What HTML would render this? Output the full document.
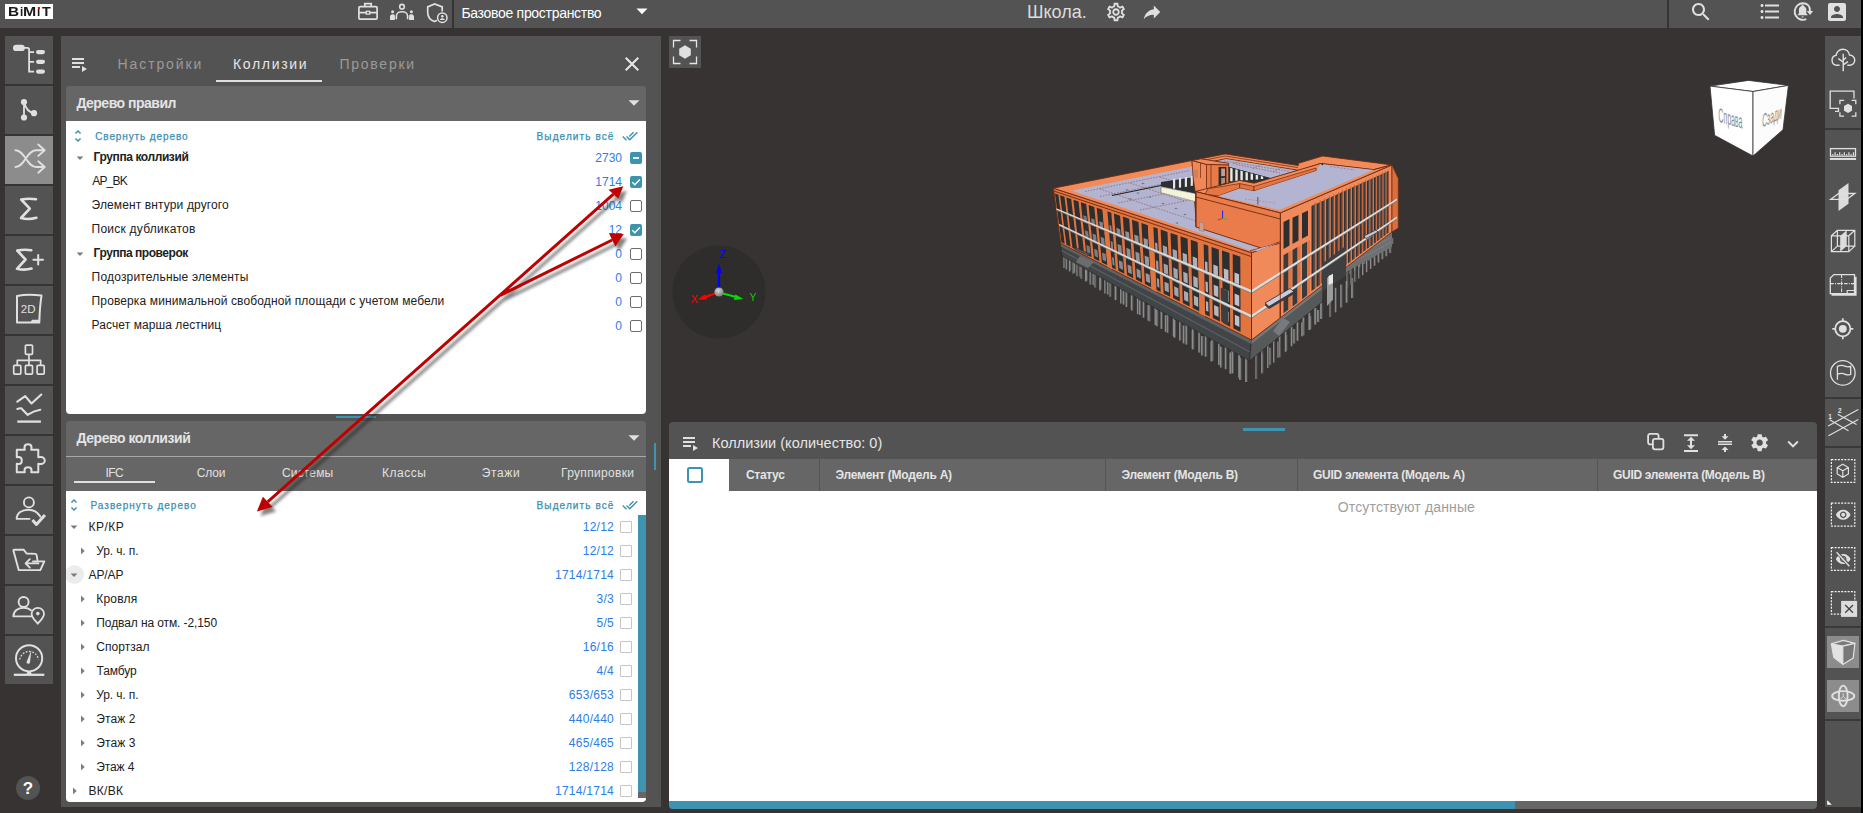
<!DOCTYPE html>
<html lang="ru">
<head>
<meta charset="utf-8">
<title>BIMIT — Коллизии</title>
<style>
*{box-sizing:border-box;margin:0;padding:0}
html,body{width:1863px;height:813px;overflow:hidden;background:#363332;font-family:"Liberation Sans",sans-serif;font-size:12px;color:#212121}
.abs,.abs-c>*{position:absolute}
#app{position:relative;width:1863px;height:813px;overflow:hidden;background:#363332}
#app div,#app span,#app svg{position:absolute}
.t{white-space:nowrap;line-height:1}
#topbar{left:0;top:0;width:1863px;height:28px;background:#535353}
.lb{left:5px;width:48px;height:48px;background:#535353}
.lb.act{background:#8c8c8c}
#lpanel{left:61px;top:36px;width:600px;height:771px;background:#535353}
.sech{background:#666;border-radius:4px 4px 0 0}
.white{background:#fff}
.row{left:0;width:580px;height:24px}
.num{color:#2b7de9;text-align:right;width:80px}
.cb{width:12px;height:12px;border:1.5px solid #6e6e6e;border-radius:2px;background:#fff}
.cb.on{border:none;background:#3d93b0}
.cb2{width:12px;height:12px;border:1.5px solid #c6c6c6;border-radius:1px;background:#fff}
.teal{color:#3a8fb0;-webkit-text-stroke:0.250px #3a8fb0}
#rtool{left:1825px;top:36px;width:36px;height:771px;background:#535353}
.sep{left:0;width:36px;height:2px;background:#363332}
</style>
</head>
<body>
<div id="app">

<!-- TOP BAR -->
<div id="topbar">
  <!-- logo -->
  <div style="left:5px;top:4px;width:48px;height:15px;background:#fff"></div>
  <span class="t" id="lg0" style="left:8.2px;top:5px;font-size:13px;font-weight:bold;color:#1a1a1a;transform-origin:0 0;transform:scaleX(1.18)">B</span><span class="t" id="lg1" style="left:19.6px;top:5px;font-size:13px;font-weight:bold;color:#1a1a1a;transform-origin:0 0;transform:scaleX(0.90)">i</span><span class="t" id="lg2" style="left:23.2px;top:5px;font-size:13px;font-weight:bold;color:#1a1a1a;transform-origin:0 0;transform:scaleX(1.22)">M</span><span class="t" id="lg3" style="left:37.3px;top:5px;font-size:13px;font-weight:bold;color:#1a1a1a;transform-origin:0 0;transform:scaleX(0.90)">i</span><span class="t" id="lg4" style="left:41.8px;top:5px;font-size:13px;font-weight:bold;color:#1a1a1a;transform-origin:0 0;transform:scaleX(1.10)">T</span><div style="left:38px;top:7px;width:2px;height:1.900px;background:#f00"></div>
  <!-- briefcase -->
  <svg style="left:357px;top:1px" width="22" height="20" viewBox="0 0 22 20" fill="none" stroke="#e0e0e0" stroke-width="1.7">
    <rect x="1.9" y="5.6" width="18.2" height="12.6" rx="1.2"/>
    <path d="M7.8 5.4V2.6h6.400V5.400"/>
    <path d="M1.900 11.700h7.300M12.800 11.700h7.300"/>
    <rect x="9.300" y="10.300" width="3.400" height="2.800" stroke-width="1.300"/>
  </svg>
  <!-- groups -->
  <svg style="left:388px;top:2px" width="28" height="20" viewBox="0 0 28 20" fill="none" stroke="#e0e0e0" stroke-width="1.600">
    <circle cx="14" cy="4.700" r="2.300"/>
    <path d="M8.400 17.200v-3.300c0-2.500 2.500-4.200 5.600-4.200s5.600 1.700 5.600 4.200v3.300" />
    <circle cx="4.600" cy="9.700" r="1.500" fill="#e0e0e0" stroke="none"/>
    <circle cx="23.400" cy="9.700" r="1.500" fill="#e0e0e0" stroke="none"/>
    <path d="M2 18v-3.200c0-1.500 1.100-2.600 2.600-2.600s2.300.7 2.300 1.500V18zM26 18v-3.200c0-1.500-1.100-2.600-2.600-2.600s-2.300.7-2.300 1.500V18z" fill="#e0e0e0" stroke="none"/>
  </svg>
  <!-- shield user -->
  <svg style="left:425px;top:1px" width="24" height="24" viewBox="0 0 24 24" fill="none" stroke="#e0e0e0" stroke-width="1.700">
    <path d="M17.200 10.500V5.900L9.600 2.900 2.700 5.900v5.300c0 4.300 2.800 7.900 6.900 9.300 .9-.3 1.600-.7 2.300-1.200"/>
    <circle cx="17.300" cy="16.700" r="4.700" stroke-width="1.500"/>
    <circle cx="17.300" cy="15.300" r="1.300" fill="#e0e0e0" stroke="none"/>
    <path d="M14.700 19c.5-1.200 1.500-1.700 2.600-1.700s2.100.5 2.600 1.700z" fill="#e0e0e0" stroke="none"/>
  </svg>
  <div style="left:452px;top:0;width:2px;height:28px;background:#363332"></div>
  <span class="t" id="tx-base" style="left:461.4px;top:6px;font-size:14px;color:#fff;letter-spacing:-0.30px">Базовое пространство</span>
  <svg style="left:636px;top:8px" width="12" height="7" viewBox="0 0 12 7"><path d="M0.500 0.500h11L6 6.200z" fill="#fff"/></svg>
  <!-- project name -->
  <span class="t" id="tx-school" style="left:1027px;top:3px;font-size:18px;color:#dcdcdc">Школа.</span>
  <svg style="left:1105px;top:1px" width="22" height="22" viewBox="0 0 24 24"><path fill="#e0e0e0" d="M19.430 12.980c.040-.320.070-.640.070-.980 0-.340-.030-.660-.070-.980l2.110-1.650c.190-.150.240-.420.120-.640l-2-3.460c-.090-.160-.260-.250-.440-.250-.060 0-.120.010-.170.030l-2.490 1c-.520-.400-1.080-.730-1.690-.980l-.380-2.650C14.460 2.180 14.250 2 14 2h-4c-.250 0-.460.180-.490.420l-.380 2.650c-.610.250-1.170.590-1.690.980l-2.490-1c-.060-.020-.120-.030-.180-.030-.170 0-.340.090-.430.250l-2 3.460c-.130.220-.070.490.120.640l2.110 1.650c-.040.320-.070.650-.070.980 0 .330.030.660.070.980l-2.110 1.650c-.190.150-.240.420-.120.640l2 3.460c.090.160.260.250.440.250.060 0 .120-.010.170-.030l2.490-1c.520.400 1.080.730 1.690.980l.380 2.650c.030.240.240.420.490.420h4c.250 0 .460-.180.490-.420l.380-2.650c.610-.250 1.170-.590 1.690-.980l2.490 1c.060.020.120.030.180.030.170 0 .340-.090.430-.250l2-3.460c.120-.220.070-.490-.120-.640l-2.110-1.650zm-1.980-1.710c.040.310.050.520.050.730 0 .210-.020.430-.050.730l-.140 1.130.890.700 1.080.840-.700 1.210-1.270-.510-1.040-.420-.900.680c-.430.320-.840.560-1.250.730l-1.060.430-.160 1.130-.200 1.350h-1.400l-.190-1.350-.160-1.130-1.060-.430c-.430-.180-.830-.410-1.230-.710l-.910-.700-1.060.430-1.270.510-.700-1.210 1.080-.840.890-.700-.140-1.130c-.030-.310-.050-.540-.050-.740s.020-.430.050-.730l.140-1.130-.890-.700-1.080-.840.700-1.210 1.270.510 1.040.420.900-.680c.430-.320.840-.560 1.250-.730l1.060-.430.160-1.130.200-1.350h1.390l.190 1.350.160 1.130 1.060.430c.430.180.830.410 1.230.710l.910.700 1.060-.430 1.270-.510.700 1.210-1.070.850-.890.700.140 1.130zM12 8c-2.210 0-4 1.790-4 4s1.790 4 4 4 4-1.790 4-4-1.790-4-4-4zm0 6c-1.100 0-2-.9-2-2s.9-2 2-2 2 .9 2 2-.9 2-2 2z"/></svg>
  <svg style="left:1141px;top:1px" width="22" height="22" viewBox="0 0 24 24"><path fill="#e0e0e0" d="M14 9V5l7 7-7 7v-4.100c-5 0-8.500 1.600-11 5.100 1-5 4-10 11-11z"/></svg>
  <div style="left:1667px;top:0;width:2px;height:28px;background:#363332"></div>
  <!-- search -->
  <svg style="left:1689px;top:0" width="24" height="24" viewBox="0 0 24 24"><path fill="#e0e0e0" d="M15.500 14h-.790l-.280-.270C15.410 12.590 16 11.110 16 9.500 16 5.910 13.090 3 9.500 3S3 5.910 3 9.500 5.910 16 9.500 16c1.610 0 3.090-.590 4.230-1.570l.270.280v.790l5 4.990L20.490 19l-4.990-5zm-6 0C7.010 14 5 11.990 5 9.500S7.010 5 9.500 5 14 7.010 14 9.500 11.990 14 9.500 14z"/></svg>
  <!-- list -->
  <svg style="left:1758px;top:0" width="24" height="24" viewBox="0 0 24 24"><path fill="#e0e0e0" d="M4 10c-.830 0-1.500.670-1.500 1.500S3.170 13 4 13s1.500-.670 1.500-1.500S4.830 10 4 10zm0-6c-.830 0-1.500.670-1.500 1.500S3.170 7 4 7s1.500-.670 1.500-1.500S4.830 4 4 4zm0 12c-.830 0-1.500.680-1.500 1.500S3.180 19 4 19s1.500-.680 1.500-1.500S4.830 16 4 16zM7 18.500h14v-2H7v2zm0-6h14v-2H7v2zm0-8v2h14v-2H7z"/></svg>
  <!-- bell refresh -->
  <svg style="left:1791px;top:0" width="24" height="24" viewBox="0 0 24 24" fill="none" stroke="#e0e0e0" stroke-width="1.900">
    <path d="M17.300 5.200A8.300 8.300 0 1 0 15.300 19.200"/>
    <path d="M17.300 5.200A8.300 8.300 0 0 1 18.900 11"/>
    <path d="M15.800 11h6.400l-3.200 4z" fill="#e0e0e0" stroke="none"/>
    <path d="M6.600 15.200v-.5l1.300-1.300V9.800c0-1.900 1-3.500 2.800-3.900V5.300c0-.5.400-.9.900-.9s.900.400.9.900v.6c1.800.4 2.800 2 2.800 3.900v3.600l1.300 1.300v.5zM10.400 16.400h2.400c0 .7-.5 1.200-1.200 1.200s-1.200-.5-1.200-1.200z" fill="#e0e0e0" stroke="none"/>
  </svg>
  <!-- user -->
  <svg style="left:1825px;top:0" width="24" height="24" viewBox="0 0 24 24"><path fill="#e0e0e0" d="M3 5v14c0 1.100.890 2 2 2h14c1.100 0 2-.9 2-2V5c0-1.100-.9-2-2-2H5c-1.110 0-2 .9-2 2zm12 4c0 1.660-1.340 3-3 3s-3-1.340-3-3 1.340-3 3-3 3 1.340 3 3zm-9 8c0-2 4-3.100 6-3.100s6 1.100 6 3.100v1H6v-1z"/></svg>
</div>

<!-- LEFT TOOLBAR -->
<div id="ltool" style="left:0;top:0;width:58px;height:813px">
<div class="lb" style="top:36px"><svg style="left:0;top:0" width="48" height="48" viewBox="0 0 48 48"><rect x="8" y="8.700" width="11.800" height="6.400" rx="3.200" fill="#e0e0e0"/><path d="M19 11.900h3.400q1.700 0 1.700 1.700V35.600h5M24.100 16.100h5M24.100 25.800h5" stroke="#e0e0e0" stroke-width="1.800" fill="none"/><rect x="31" y="14" width="9" height="4.200" rx="2.100" fill="#e0e0e0"/><rect x="31" y="23.700" width="9" height="4.200" rx="2.100" fill="#e0e0e0"/><rect x="31" y="33.500" width="9" height="4.200" rx="2.100" fill="#e0e0e0"/></svg></div>
<div class="lb" style="top:86px"><svg style="left:0;top:0" width="48" height="48" viewBox="0 0 48 48"><circle cx="19" cy="16" r="3.100" fill="#e0e0e0"/><circle cx="19" cy="31.500" r="3.100" fill="#e0e0e0"/><circle cx="29" cy="27.200" r="3.100" fill="#e0e0e0"/><path d="M19 16v15.500M19.500 17c1 5 4 9 9.500 10.200" stroke="#e0e0e0" stroke-width="1.800" fill="none"/></svg></div>
<div class="lb act" style="top:136px"><svg style="left:0;top:0" width="48" height="48" viewBox="0 0 48 48"><path d="M10.500 14.200C20 14.200 21.500 31 31 31H39M10.500 31C20 31 21.500 14.200 31 14.200H39M33.300 8.500l6.400 5.700-6.400 5.700M33.300 25.300l6.400 5.700-6.400 5.700" stroke="#e0e0e0" fill="none" stroke-linecap="round" stroke-linejoin="round" stroke-width="1.900"/></svg></div>
<div class="lb" style="top:186px"><svg style="left:0;top:0" width="48" height="48" viewBox="0 0 48 48"><path d="M31 13.300C27 12.600 21 12.600 16.200 13.500L24.800 22.700 16 32C21 33.300 27 33 31.400 31.800" stroke="#e0e0e0" fill="none" stroke-linecap="round" stroke-linejoin="round" stroke-width="2.600"/></svg></div>
<div class="lb" style="top:236px"><svg style="left:0;top:0" width="48" height="48" viewBox="0 0 48 48"><path d="M26.300 14.300C22.500 13.600 17 13.600 12.200 14.500L20.500 23.500 12 32.800C17 34 22.500 33.800 26.500 32.600" stroke="#e0e0e0" fill="none" stroke-linecap="round" stroke-linejoin="round" stroke-width="2.600"/><path d="M33.200 19v9.600M28.400 23.800h9.600" stroke="#e0e0e0" fill="none" stroke-linecap="round" stroke-linejoin="round" stroke-width="2"/></svg></div>
<div class="lb" style="top:286px"><svg style="left:0;top:0" width="48" height="48" viewBox="0 0 48 48"><path d="M12 9.900C19 8.700 29 8.700 36.500 9.600 35.300 17 34.600 26 34.300 36.600H12z" stroke="#e0e0e0" fill="none" stroke-linecap="round" stroke-linejoin="round" stroke-width="2"/><path d="M25.500 36.600l1.500-2.900h7.300v2.900z" fill="#e0e0e0"/><text x="15.800" y="27.300" font-family="Liberation Sans, sans-serif" font-size="11.500" fill="#e0e0e0">2D</text></svg></div>
<div class="lb" style="top:336px"><svg style="left:0;top:0" width="48" height="48" viewBox="0 0 48 48"><rect x="20.400" y="9.100" width="7.100" height="9.200" rx="1" stroke="#e0e0e0" fill="none" stroke-linecap="butt" stroke-linejoin="round" stroke-width="1.700"/><rect x="8.700" y="29.300" width="7.100" height="8.800" rx="1" stroke="#e0e0e0" fill="none" stroke-linecap="butt" stroke-linejoin="round" stroke-width="1.700"/><rect x="20.400" y="29.300" width="7.100" height="8.800" rx="1" stroke="#e0e0e0" fill="none" stroke-linecap="butt" stroke-linejoin="round" stroke-width="1.700"/><rect x="32.100" y="29.300" width="7.100" height="8.800" rx="1" stroke="#e0e0e0" fill="none" stroke-linecap="butt" stroke-linejoin="round" stroke-width="1.700"/><path d="M23.950 18.300v11M12.250 29.300v-5h23.400v5" stroke="#e0e0e0" fill="none" stroke-linecap="butt" stroke-linejoin="round" stroke-width="1.700"/></svg></div>
<div class="lb" style="top:386px"><svg style="left:0;top:0" width="48" height="48" viewBox="0 0 48 48"><path d="M12.300 15.600L20.200 10.100 26.500 17.500 36.300 8.500M12.300 22.900C14 22.300 15.200 22 16.200 22.300L22.500 28.800C26.500 26.300 31 24.600 35.300 23.800" stroke="#e0e0e0" fill="none" stroke-linecap="round" stroke-linejoin="round" stroke-width="2.100"/><path d="M12.300 35.600H35.900" stroke="#e0e0e0" fill="none" stroke-linecap="butt" stroke-linejoin="round" stroke-width="2.300"/></svg></div>
<div class="lb" style="top:436px"><svg style="left:0;top:0" width="48" height="48" viewBox="0 0 48 48"><path d="M11.800 13.800H19.800C19.800 13.800 19.500 12.500 19.500 11.500 19.500 9.700 21 8.300 23 8.300 25 8.300 26.500 9.700 26.500 11.500 26.500 12.500 26.200 13.800 26.200 13.800H33.300V21.300C33.300 21.300 34.800 21 35.800 21 37.900 21 39.800 22.500 39.800 24.500 39.800 26.500 37.900 28 35.800 28 34.800 28 33.300 27.700 33.300 27.700V36.200H26.200C26.200 36.200 26.500 35 26.500 34.200 26.500 32.500 25 31.300 23 31.300 21 31.300 19.500 32.500 19.500 34.200 19.500 35 19.800 36.200 19.800 36.200H11.800V27.700C11.800 27.700 13 28 13.800 28 15.500 28 16.800 26.500 16.800 24.500 16.800 22.500 15.500 21 13.800 21 13 21 11.800 21.300 11.800 21.300Z" stroke="#e0e0e0" fill="none" stroke-linecap="round" stroke-linejoin="round" stroke-width="2"/></svg></div>
<div class="lb" style="top:486px"><svg style="left:0;top:0" width="48" height="48" viewBox="0 0 48 48"><circle cx="23.900" cy="16.400" r="5" stroke="#e0e0e0" fill="none" stroke-linecap="round" stroke-linejoin="round" stroke-width="1.900"/><path d="M11.700 32.900C11.700 27 17 23.700 23.500 23.700 28.500 23.700 32.500 26 35.300 30.600M11.700 32.900H24.500" stroke="#e0e0e0" fill="none" stroke-linecap="round" stroke-linejoin="round" stroke-width="1.900"/><path d="M27.500 34.100L31.400 38.400 39.900 29" stroke="#e0e0e0" fill="none" stroke-linecap="butt" stroke-linejoin="round" stroke-width="3" stroke-linecap="butt"/></svg></div>
<div class="lb" style="top:536px"><svg style="left:0;top:0" width="48" height="48" viewBox="0 0 48 48"><path d="M13.700 34.100L8.400 14.400Q8.600 13.800 9.500 13.800L18.600 13.600 21.600 17.500 30.400 17.900Q31.500 18 31.700 19.500L32.400 23.800M13.700 34.100H35.300L39.300 25.400H28M20.600 27.400H33.400M24.800 23.200L20.600 27.400 24.800 31.600" stroke="#e0e0e0" fill="none" stroke-linecap="round" stroke-linejoin="round" stroke-width="1.900"/></svg></div>
<div class="lb" style="top:586px"><svg style="left:0;top:0" width="48" height="48" viewBox="0 0 48 48"><circle cx="18.600" cy="16" r="5" stroke="#e0e0e0" fill="none" stroke-linecap="round" stroke-linejoin="round" stroke-width="1.900"/><path d="M8.400 30.400C8.400 25 13 21.700 18.600 21.700 21.500 21.700 24 22.500 26 24.200M8.400 30.400H27" stroke="#e0e0e0" fill="none" stroke-linecap="round" stroke-linejoin="round" stroke-width="1.900"/><path d="M32.800 21.900c3.400 0 6.200 2.600 6.200 5.800 0 4-3.700 6.800-6.200 10-2.500-3.200-6.200-6-6.200-10 0-3.200 2.800-5.800 6.200-5.800z" stroke="#e0e0e0" fill="none" stroke-linecap="round" stroke-linejoin="round" stroke-width="1.800"/><circle cx="32.800" cy="27.600" r="1.800" fill="#e0e0e0"/></svg></div>
<div class="lb" style="top:636px"><svg style="left:0;top:0" width="48" height="48" viewBox="0 0 48 48"><circle cx="24.100" cy="22.300" r="13.100" stroke="#e0e0e0" fill="none" stroke-linecap="round" stroke-linejoin="round" stroke-width="2"/><path d="M14.800 23.500a9.400 9.400 0 0 1 18.600 0" stroke="#e0e0e0" stroke-width="1.200" fill="none" stroke-dasharray="1.800 1.500"/><path d="M26.300 14.600l-1.300 12a1.800 1.800 0 0 1-3.500-.5z" fill="#e0e0e0"/><path d="M22.300 35.300q0 2.500-1.500 3.500h6.600q-1.500-1-1.500-3.500z" fill="#e0e0e0"/><path d="M8.800 38.800H39.300" stroke="#e0e0e0" fill="none" stroke-linecap="butt" stroke-linejoin="round" stroke-width="2.300"/></svg></div>
<div style="left:16px;top:776px;width:24px;height:24px;border-radius:12px;background:#535353"></div>
<span class="t" id="help" style="left:22.800px;top:780.100px;font-size:17px;font-weight:bold;color:#fff">?</span>
</div>

<!-- LEFT PANEL -->
<div id="lpanel"></div>
<svg style="left:68px;top:52px" width="24" height="24" viewBox="0 0 24 24"><path fill="#e0e0e0" d="M4 10h12v2H4zm0-4h12v2H4zm0 8h8v2H4zm10 0v6l5-3z"/></svg>
<span class="t" id="tab1" style="left:117.6px;top:57px;font-size:14px;letter-spacing:1.88px;color:#9a9a9a">Настройки</span>
<span class="t" id="tab2" style="left:233.0px;top:57px;font-size:14px;letter-spacing:1.67px;color:#e6e6e6">Коллизии</span>
<span class="t" id="tab3" style="left:339.4px;top:57px;font-size:14px;letter-spacing:1.76px;color:#9a9a9a">Проверки</span>
<div style="left:216px;top:80px;width:106px;height:2px;background:#e0e0e0"></div>
<svg style="left:620px;top:52px" width="24" height="24" viewBox="0 0 24 24"><path fill="#e8e8e8" d="M19 6.410L17.590 5 12 10.590 6.410 5 5 6.410 10.590 12 5 17.590 6.410 19 12 13.410 17.590 19 19 17.590 13.410 12z"/></svg>
<div class="sech" style="left:66px;top:86px;width:580px;height:36px"></div>
<span class="t" id="sec1" style="left:76.4px;top:96px;font-size:14px;font-weight:bold;color:#e4e4e4;letter-spacing:-0.50px">Дерево правил</span>
<svg style="left:627px;top:99px" width="14" height="8" viewBox="0 0 14 8"><path d="M1.500 1.300h11L7 6.800z" fill="#e0e0e0"/></svg>
<div class="white" style="left:66px;top:121px;width:580px;height:293px;border-radius:0 0 4px 4px"></div>
<svg style="left:70px;top:128px" width="16" height="16" viewBox="0 0 24 24"><path fill="#3a8fb0" d="M12 5.830L15.170 9l1.410-1.410L12 3 7.410 7.590 8.830 9 12 5.830zm0 12.340L8.830 15l-1.410 1.410L12 21l4.590-4.590L15.170 15 12 18.170z"/></svg>
<span class="t teal" id="collapse1" style="left:95.2px;top:131.9px;font-size:10px;letter-spacing:0.89px">Свернуть дерево</span>
<span class="t teal" id="selall1" style="left:536.6px;top:131.9px;font-size:10px;letter-spacing:1.10px">Выделить всё</span>
<svg style="left:622px;top:128px" width="16" height="16" viewBox="0 0 24 24"><path fill="#3a8fb0" d="M18 7l-1.410-1.410-6.340 6.340 1.410 1.410L18 7zm4.240-1.410L11.660 16.170 7.480 12l-1.410 1.410L11.660 19l12-12-1.420-1.410zM.410 13.410L6 19l1.410-1.410L1.830 12 .410 13.410z"/></svg>
<svg style="left:75px;top:155px" width="10" height="6" viewBox="0 0 10 6"><path d="M1.600 1.500h6.800L5 5z" fill="#7a7a7a"/></svg>
<span class="t" id="r1_0" style="left:93.6px;top:151px;font-size:12px;font-weight:bold;color:#212121;letter-spacing:-0.41px">Группа коллизий</span>
<span class="t num" id="n1_0" style="left:542px;top:151.5px;font-size:12px">2730</span>
<div class="cb on" style="left:630px;top:152px"><div style="left:3px;top:5.200px;width:6px;height:1.600px;background:#e4eef2"></div></div>
<span class="t" id="r1_1" style="left:92.200px;top:175px;font-size:12px;color:#212121;letter-spacing:-0.81px">AP_BK</span>
<span class="t num" id="n1_1" style="left:542px;top:175.5px;font-size:12px">1714</span>
<div class="cb on" style="left:630px;top:176px"><svg style="left:0;top:0" width="12" height="12" viewBox="0 0 12 12"><path d="M2.300 6.200l2.500 2.500 5-5.200" stroke="#fff" stroke-width="1.500" fill="none"/></svg></div>
<span class="t" id="r1_2" style="left:91.6px;top:199px;font-size:12px;color:#212121;letter-spacing:0.12px">Элемент внтури другого</span>
<span class="t num" id="n1_2" style="left:542px;top:199.5px;font-size:12px">1004</span>
<div class="cb" style="left:630px;top:200px"></div>
<span class="t" id="r1_3" style="left:91.6px;top:223px;font-size:12px;color:#212121;letter-spacing:0.24px">Поиск дубликатов</span>
<span class="t num" id="n1_3" style="left:542px;top:223.5px;font-size:12px">12</span>
<div class="cb on" style="left:630px;top:224px"><svg style="left:0;top:0" width="12" height="12" viewBox="0 0 12 12"><path d="M2.300 6.200l2.500 2.500 5-5.200" stroke="#fff" stroke-width="1.500" fill="none"/></svg></div>
<svg style="left:75px;top:251px" width="10" height="6" viewBox="0 0 10 6"><path d="M1.600 1.500h6.800L5 5z" fill="#7a7a7a"/></svg>
<span class="t" id="r1_4" style="left:93.6px;top:247px;font-size:12px;font-weight:bold;color:#212121;letter-spacing:-0.46px">Группа проверок</span>
<span class="t num" id="n1_4" style="left:542px;top:247.5px;font-size:12px">0</span>
<div class="cb" style="left:630px;top:248px"></div>
<span class="t" id="r1_5" style="left:91.6px;top:271px;font-size:12px;color:#212121;letter-spacing:0.18px">Подозрительные элементы</span>
<span class="t num" id="n1_5" style="left:542px;top:271.5px;font-size:12px">0</span>
<div class="cb" style="left:630px;top:272px"></div>
<span class="t" id="r1_6" style="left:91.6px;top:295px;font-size:12px;color:#212121;letter-spacing:0.12px">Проверка минимальной свободной площади с учетом мебели</span>
<span class="t num" id="n1_6" style="left:542px;top:295.5px;font-size:12px">0</span>
<div class="cb" style="left:630px;top:296px"></div>
<span class="t" id="r1_7" style="left:91.6px;top:319px;font-size:12px;color:#212121;letter-spacing:0.08px">Расчет марша лестниц</span>
<span class="t num" id="n1_7" style="left:542px;top:319.5px;font-size:12px">0</span>
<div class="cb" style="left:630px;top:320px"></div>
<div style="left:336px;top:416px;width:40px;height:2px;background:#3d93b0"></div>
<div style="left:654px;top:443px;width:2px;height:27px;background:#3d93b0"></div>
<div class="sech" style="left:66px;top:421px;width:580px;height:70px"></div>
<span class="t" id="sec2" style="left:76.6px;top:431px;font-size:14px;font-weight:bold;color:#e4e4e4;letter-spacing:-0.47px">Дерево коллизий</span>
<svg style="left:627px;top:434px" width="14" height="8" viewBox="0 0 14 8"><path d="M1.500 1.300h11L7 6.800z" fill="#e0e0e0"/></svg>
<div style="left:66px;top:456px;width:580px;height:1px;background:#a8a8a8"></div>
<span class="t" id="st0" style="left:66.3px;top:467px;width:96px;text-align:center;font-size:12px;color:#e0e0e0;letter-spacing:-0.50px">IFC</span>
<span class="t" id="st1" style="left:163.0px;top:467px;width:96px;text-align:center;font-size:12px;color:#e0e0e0;letter-spacing:-0.20px">Слои</span>
<span class="t" id="st2" style="left:259.7px;top:467px;width:96px;text-align:center;font-size:12px;color:#e0e0e0;letter-spacing:0.17px">Системы</span>
<span class="t" id="st3" style="left:356.3px;top:467px;width:96px;text-align:center;font-size:12px;color:#e0e0e0;letter-spacing:0.52px">Классы</span>
<span class="t" id="st4" style="left:453.0px;top:467px;width:96px;text-align:center;font-size:12px;color:#e0e0e0;letter-spacing:0.60px">Этажи</span>
<span class="t" id="st5" style="left:549.7px;top:467px;width:96px;text-align:center;font-size:12px;color:#e0e0e0;letter-spacing:0.32px">Группировки</span>
<div style="left:74px;top:481px;width:81px;height:2px;background:#e0e0e0"></div>
<div class="white" style="left:66px;top:491px;width:580px;height:311px;border-radius:0 0 4px 4px"></div>
<svg style="left:66px;top:497px" width="16" height="16" viewBox="0 0 24 24"><path fill="#3a8fb0" d="M12 5.830L15.170 9l1.410-1.410L12 3 7.410 7.590 8.830 9 12 5.830zm0 12.340L8.830 15l-1.410 1.410L12 21l4.590-4.590L15.170 15 12 18.170z"/></svg>
<span class="t teal" id="expand2" style="left:90.5px;top:500.9px;font-size:10px;letter-spacing:1.01px">Развернуть дерево</span>
<span class="t teal" id="selall2" style="left:536.6px;top:500.9px;font-size:10px;letter-spacing:1.10px">Выделить всё</span>
<svg style="left:622px;top:497px" width="16" height="16" viewBox="0 0 24 24"><path fill="#3a8fb0" d="M18 7l-1.410-1.410-6.340 6.340 1.410 1.410L18 7zm4.240-1.410L11.660 16.170 7.480 12l-1.410 1.410L11.660 19l12-12-1.420-1.410zM.410 13.410L6 19l1.410-1.410L1.830 12 .410 13.410z"/></svg>
<svg style="left:69px;top:524px" width="10" height="6" viewBox="0 0 10 6"><path d="M1.600 1.500h6.800L5 5z" fill="#7a7a7a"/></svg>
<span class="t" id="r2_0" style="left:88.5px;top:521px;font-size:12px;color:#212121;letter-spacing:0.50px">КР/КР</span>
<span class="t num" id="n2_0" style="left:534px;top:521.0px;font-size:12px;letter-spacing:0.25px">12/12</span>
<div class="cb2" style="left:620px;top:521px"></div>
<svg style="left:80px;top:546px" width="6" height="10" viewBox="0 0 6 10"><path d="M1 1.400v7.200L4.700 5z" fill="#7d7d7d"/></svg>
<span class="t" id="r2_1" style="left:96.3px;top:545px;font-size:12px;color:#212121;letter-spacing:-0.12px">Ур. ч. п.</span>
<span class="t num" id="n2_1" style="left:534px;top:545.0px;font-size:12px;letter-spacing:0.25px">12/12</span>
<div class="cb2" style="left:620px;top:545px"></div>
<div style="left:66px;top:560px;width:30px;height:30px;overflow:hidden"><div style="left:-1.500px;top:5px;width:19px;height:19px;border-radius:9.500px;background:#ececec"></div></div>
<svg style="left:69px;top:572px" width="10" height="6" viewBox="0 0 10 6"><path d="M1.600 1.500h6.800L5 5z" fill="#7a7a7a"/></svg>
<span class="t" id="r2_2" style="left:88.5px;top:569px;font-size:12px;color:#212121;letter-spacing:-0.10px">АР/АР</span>
<span class="t num" id="n2_2" style="left:534px;top:569.0px;font-size:12px;letter-spacing:0.25px">1714/1714</span>
<div class="cb2" style="left:620px;top:569px"></div>
<svg style="left:80px;top:594px" width="6" height="10" viewBox="0 0 6 10"><path d="M1 1.400v7.200L4.700 5z" fill="#7d7d7d"/></svg>
<span class="t" id="r2_3" style="left:96.3px;top:593px;font-size:12px;color:#212121;letter-spacing:0.20px">Кровля</span>
<span class="t num" id="n2_3" style="left:534px;top:593.0px;font-size:12px;letter-spacing:0.25px">3/3</span>
<div class="cb2" style="left:620px;top:593px"></div>
<svg style="left:80px;top:618px" width="6" height="10" viewBox="0 0 6 10"><path d="M1 1.400v7.200L4.700 5z" fill="#7d7d7d"/></svg>
<span class="t" id="r2_4" style="left:96.3px;top:617px;font-size:12px;color:#212121;letter-spacing:-0.10px">Подвал на отм. -2,150</span>
<span class="t num" id="n2_4" style="left:534px;top:617.0px;font-size:12px;letter-spacing:0.25px">5/5</span>
<div class="cb2" style="left:620px;top:617px"></div>
<svg style="left:80px;top:642px" width="6" height="10" viewBox="0 0 6 10"><path d="M1 1.400v7.200L4.700 5z" fill="#7d7d7d"/></svg>
<span class="t" id="r2_5" style="left:96.3px;top:641px;font-size:12px;color:#212121;letter-spacing:0.04px">Спортзал</span>
<span class="t num" id="n2_5" style="left:534px;top:641.0px;font-size:12px;letter-spacing:0.25px">16/16</span>
<div class="cb2" style="left:620px;top:641px"></div>
<svg style="left:80px;top:666px" width="6" height="10" viewBox="0 0 6 10"><path d="M1 1.400v7.200L4.700 5z" fill="#7d7d7d"/></svg>
<span class="t" id="r2_6" style="left:96.600px;top:665px;font-size:12px;color:#212121;letter-spacing:-0.12px">Тамбур</span>
<span class="t num" id="n2_6" style="left:534px;top:665.0px;font-size:12px;letter-spacing:0.25px">4/4</span>
<div class="cb2" style="left:620px;top:665px"></div>
<svg style="left:80px;top:690px" width="6" height="10" viewBox="0 0 6 10"><path d="M1 1.400v7.200L4.700 5z" fill="#7d7d7d"/></svg>
<span class="t" id="r2_7" style="left:96.3px;top:689px;font-size:12px;color:#212121;letter-spacing:-0.12px">Ур. ч. п.</span>
<span class="t num" id="n2_7" style="left:534px;top:689.0px;font-size:12px;letter-spacing:0.25px">653/653</span>
<div class="cb2" style="left:620px;top:689px"></div>
<svg style="left:80px;top:714px" width="6" height="10" viewBox="0 0 6 10"><path d="M1 1.400v7.200L4.700 5z" fill="#7d7d7d"/></svg>
<span class="t" id="r2_8" style="left:96.3px;top:713px;font-size:12px;color:#212121;letter-spacing:0.08px">Этаж 2</span>
<span class="t num" id="n2_8" style="left:534px;top:713.0px;font-size:12px;letter-spacing:0.25px">440/440</span>
<div class="cb2" style="left:620px;top:713px"></div>
<svg style="left:80px;top:738px" width="6" height="10" viewBox="0 0 6 10"><path d="M1 1.400v7.200L4.700 5z" fill="#7d7d7d"/></svg>
<span class="t" id="r2_9" style="left:96.3px;top:737px;font-size:12px;color:#212121;letter-spacing:0.08px">Этаж 3</span>
<span class="t num" id="n2_9" style="left:534px;top:737.0px;font-size:12px;letter-spacing:0.25px">465/465</span>
<div class="cb2" style="left:620px;top:737px"></div>
<svg style="left:80px;top:762px" width="6" height="10" viewBox="0 0 6 10"><path d="M1 1.400v7.200L4.700 5z" fill="#7d7d7d"/></svg>
<span class="t" id="r2_10" style="left:96.3px;top:761px;font-size:12px;color:#212121;letter-spacing:-0.12px">Этаж 4</span>
<span class="t num" id="n2_10" style="left:534px;top:761.0px;font-size:12px;letter-spacing:0.25px">128/128</span>
<div class="cb2" style="left:620px;top:761px"></div>
<svg style="left:72px;top:786px" width="6" height="10" viewBox="0 0 6 10"><path d="M1 1.400v7.200L4.700 5z" fill="#7d7d7d"/></svg>
<span class="t" id="r2_11" style="left:88.5px;top:785px;font-size:12px;color:#212121;letter-spacing:0.28px">ВК/ВК</span>
<span class="t num" id="n2_11" style="left:534px;top:785.0px;font-size:12px;letter-spacing:0.25px">1714/1714</span>
<div class="cb2" style="left:620px;top:785px"></div>
<div style="left:638px;top:515px;width:8px;height:283px;background:#666"></div>
<div style="left:638px;top:515px;width:8px;height:277px;background:#3d93b0"></div>

<!-- VIEWPORT -->
<div id="view" style="left:661px;top:28px;width:1164px;height:394px"></div>
<div style="left:669px;top:36px;width:32px;height:32px;background:#535353"></div>
<svg style="left:669px;top:36px" width="32" height="32" viewBox="669 36 32 32" fill="none" stroke="#e6e6e6" stroke-width="1.300"><path d="M673.500 47.500v-7h7M689.500 40.500h7v7M696.500 56.500v7h-7M680.500 63.500h-7v-7"/><path d="M685 45.300l5.800 3.350v6.700l-5.800 3.350l-5.800-3.350v-6.700z" fill="#e0e0e0" stroke="none"/></svg>
<svg style="left:669px;top:242px" width="100" height="100" viewBox="669 242 100 100"><defs><radialGradient id="sph" cx="0.4" cy="0.350" r="0.7"><stop offset="0" stop-color="#d8d8d8"/><stop offset="1" stop-color="#777"/></radialGradient></defs><circle cx="719" cy="292" r="46.500" fill="#2f2c2c"/><path d="M719 288V271" stroke="#0000ff" stroke-width="2.200"/><path d="M719 263.500l2.800 9.500h-5.600z" fill="#0000ff"/><path d="M722 293.300l15 3.900" stroke="#00e000" stroke-width="2.200"/><path d="M743.500 298.900l-9.600 1.200l1.500-5.600z" fill="#00e000"/><path d="M716 293.300l-12 4.100" stroke="#ff0000" stroke-width="2.200"/><path d="M697.600 299.700l7.400-5.400l2 5.200z" fill="#ff0000"/><circle cx="719" cy="292" r="4.600" fill="url(#sph)"/><text x="719.500" y="257.600" font-family="Liberation Sans, sans-serif" font-size="10.500" fill="#0000ff">Z</text><text x="749.500" y="300.800" font-family="Liberation Sans, sans-serif" font-size="10.500" fill="#00d000">Y</text><text x="690.800" y="302.500" font-family="Liberation Sans, sans-serif" font-size="10.500" fill="#ff0000">X</text></svg>
<svg style="left:1700px;top:70px" width="100" height="95" viewBox="1700 70 100 95"><path d="M1710 86.100l38.600-5.700l39.800 5l-35.400 6.100z" fill="#fff" stroke="#333" stroke-width="0.800" stroke-linejoin="round"/><path d="M1710 86.100l43 5.400v64.500l-38.400-20.700z" fill="#fff" stroke="#333" stroke-width="0.800" stroke-linejoin="round"/><path d="M1753 91.500l35.400-6.100l-5.400 44.300l-30 26.300z" fill="#fcfcfc" stroke="#333" stroke-width="0.800" stroke-linejoin="round"/><text transform="matrix(0.400 0.115 0.020 1 1718.600 121.800)" font-family="Liberation Sans, sans-serif" font-size="20" fill="#8c8c8c" textLength="60" lengthAdjust="spacingAndGlyphs">Справа</text><text transform="matrix(0.380 -0.180 -0.030 0.950 1761.900 127.500)" font-family="Liberation Sans, sans-serif" font-size="20" fill="#8c8c8c" textLength="52" lengthAdjust="spacingAndGlyphs">Сзади</text></svg>

<!-- TABLE -->
<div style="left:669px;top:422px;width:1148px;height:37px;background:#535353;border-radius:4px 4px 0 0"></div>
<svg style="left:679px;top:430.500px" width="24" height="24" viewBox="0 0 24 24"><path fill="#e0e0e0" d="M4 10h12v2H4zm0-4h12v2H4zm0 8h8v2H4zm10 0v6l5-3z"/></svg>
<span class="t" id="ttitle" style="left:712.0px;top:436px;font-size:14.500px;color:#e6e6e6;letter-spacing:0.02px">Коллизии (количество: 0)</span>
<div style="left:1243px;top:428px;width:42px;height:3px;background:#3d93b0"></div>
<svg style="left:1645px;top:432px" width="21" height="21" viewBox="0 0 21 21" fill="none" stroke="#e0e0e0" stroke-width="1.800"><rect x="3.100" y="1.900" width="10.500" height="10.500" rx="2"/><rect x="7.900" y="6.800" width="10.500" height="10.500" rx="2" fill="#535353"/></svg>
<svg style="left:1679px;top:430px" width="24" height="24" viewBox="0 0 24 24"><path fill="#e0e0e0" d="M5 20h14v2H5zM5 4.200h14v2H5zM13 10.700h3l-4-4-4 4h3v4.600H8l4 4 4-4h-3z"/></svg>
<svg style="left:1713px;top:430px" width="24" height="24" viewBox="0 0 24 24"><path fill="#e0e0e0" d="M11 4.100h2v2.100h2.500L12 9.700 8.500 6.200H11zM5 11.100h14v1.500H5zM5 13.500h14v1.500H5zM12 16.400l3.500 3.500H13v2h-2v-2H8.500z"/></svg>
<svg style="left:1748.700px;top:432.400px" width="21.300" height="21.300" viewBox="0 0 24 24"><path fill="#e0e0e0" d="M19.140 12.940c.040-.3.060-.610.060-.940 0-.320-.020-.640-.070-.940l2.030-1.580c.180-.140.230-.410.120-.610l-1.920-3.320c-.120-.220-.370-.290-.590-.220l-2.390.960c-.5-.380-1.030-.7-1.620-.940l-.360-2.540c-.040-.240-.240-.410-.480-.410h-3.840c-.240 0-.430.170-.470.410l-.360 2.540c-.590.240-1.130.570-1.620.940l-2.390-.960c-.220-.080-.470 0-.590.220L2.740 8.870c-.120.210-.080.470.120.610l2.030 1.580c-.050.3-.090.630-.090.940s.020.640.070.940l-2.030 1.580c-.180.140-.230.410-.120.610l1.920 3.320c.120.220.370.290.590.220l2.390-.960c.5.380 1.030.7 1.620.940l.360 2.540c.050.240.240.410.480.410h3.840c.240 0 .440-.170.470-.410l.360-2.540c.590-.240 1.130-.560 1.620-.940l2.390.960c.220.080.470 0 .590-.220l1.920-3.320c.120-.220.070-.470-.120-.610l-2.010-1.580zM12 15.600c-1.980 0-3.600-1.620-3.600-3.600s1.620-3.600 3.600-3.600 3.600 1.620 3.600 3.600-1.620 3.600-3.600 3.600z"/></svg>
<svg style="left:1782px;top:433px" width="22" height="22" viewBox="0 0 24 24"><path fill="#e0e0e0" d="M16.590 8.590L12 13.170 7.410 8.590 6 10l6 6 6-6z"/></svg>
<div style="left:669px;top:459px;width:1148px;height:32px;background:#666"></div>
<div style="left:669px;top:459px;width:60px;height:32px;background:#fff"></div>
<div style="left:687px;top:467px;width:15.500px;height:15.500px;border:2px solid #3d93b0;border-radius:2.500px;background:#fff"></div>
<div style="left:819px;top:459px;width:1px;height:32px;background:#555"></div>
<div style="left:1105px;top:459px;width:1px;height:32px;background:#555"></div>
<div style="left:1297px;top:459px;width:1px;height:32px;background:#555"></div>
<div style="left:1597px;top:459px;width:1px;height:32px;background:#555"></div>
<span class="t" id="h0" style="left:746.0px;top:469px;font-size:12px;font-weight:bold;color:#e4e4e4;letter-spacing:-0.32px">Статус</span>
<span class="t" id="h1" style="left:835.5px;top:469px;font-size:12px;font-weight:bold;color:#e4e4e4;letter-spacing:-0.24px">Элемент (Модель A)</span>
<span class="t" id="h2" style="left:1121.5px;top:469px;font-size:12px;font-weight:bold;color:#e4e4e4;letter-spacing:-0.24px">Элемент (Модель B)</span>
<span class="t" id="h3" style="left:1313.0px;top:469px;font-size:12px;font-weight:bold;color:#e4e4e4;letter-spacing:-0.29px">GUID элемента (Модель A)</span>
<span class="t" id="h4" style="left:1613.0px;top:469px;font-size:12px;font-weight:bold;color:#e4e4e4;letter-spacing:-0.30px">GUID элемента (Модель B)</span>
<div style="left:669px;top:491px;width:1148px;height:311px;background:#fff"></div>
<span class="t" id="nodata" style="left:1337.8px;top:499.500px;font-size:14px;color:#9e9e9e;letter-spacing:0.14px">Отсутствуют данные</span>
<div style="left:669px;top:801px;width:1148px;height:8px;background:#666;border-radius:0 0 4px 4px"></div>
<div style="left:669px;top:801px;width:846px;height:8px;background:#3d93b0;border-radius:0 0 0 4px"></div>

<!-- RIGHT TOOLBAR -->
<div id="rtool"></div>
<div style="left:1825px;top:128px;width:36px;height:2px;background:#3b3838"></div>
<div style="left:1825px;top:397px;width:36px;height:2px;background:#3b3838"></div>
<div style="left:1825px;top:446px;width:36px;height:2px;background:#3b3838"></div>
<div style="left:1825px;top:626px;width:36px;height:2px;background:#3b3838"></div>
<div style="left:1825px;top:719px;width:36px;height:2px;background:#3b3838"></div>
<svg style="left:1825px;top:36px" width="36" height="772" viewBox="1825 36 36 772" fill="none" stroke="#e0e0e0" stroke-width="1.400">
<path d="M1839.600 65.300h-2.800a5.100 5.100 0 0 1-.6-10.100a6.700 6.700 0 0 1 13.300-.2a5.100 5.100 0 0 1 .2 10.300h-2.400"/><path d="M1843.200 53.800v17.400M1838.300 58.600l4.900 3.400M1846.200 57.500l-3 2.600M1848 61.600l-4.800 3.200"/>
<path d="M1854 98.500v-7.300h-23.800v17.200h8.300v2.900h-3.500" stroke-width="1.300"/>
<path d="M1839.900 104.300v-4h4.200M1851.600 100.300h4.200v4M1855.800 112.200v4h-4.200M1844.100 116.200h-4.200v-4" stroke-width="1.300"/>
<path d="M1848 103.800l4 2.300v4.600l-4 2.300l-4-2.300v-4.600z" fill="#e0e0e0" stroke="none"/>
<rect x="1830.500" y="148.600" width="25" height="7.600" stroke-width="1.300"/><path d="M1829.900 158.950h26.200" stroke-width="2"/>
<path d="M1832.8 155.600v-1.700M1835.1 155.600v-3.400M1837.4 155.600v-1.700M1839.7 155.600v-3.400M1842.0 155.600v-1.700M1844.3 155.600v-3.400M1846.6 155.600v-1.700M1848.9 155.600v-3.400M1851.2 155.600v-1.700M1853.5 155.600v-3.400" stroke-width="1.200"/>
<path d="M1838.500 190.300l10-7.200v20.700l-10 7.200z" fill="#dcdcdc" stroke="none"/><path d="M1830.800 199.300l8-5.800h16l-8 5.800z" stroke-width="1.300"/>
<path d="M1840.200 236l6.500-5.700v15.700l-6.500 5.700z" fill="#dcdcdc" stroke="none"/>
<path d="M1831.400 235.800h17.400v15.800h-17.400zM1837.400 230.300h17.400v15.800h-17.400zM1831.400 235.800l6-5.500M1848.800 235.800l6-5.500M1848.800 251.600l6-5.500M1831.400 251.600l6-5.500" stroke-width="1.200"/>
<path d="M1830.300 278l3.600-3.400h20.600v19h-24.200z" stroke-width="1.300"/><path d="M1831.500 294.800h24.200v-18" stroke-width="1.800"/>
<path d="M1830.300 283.600h24.200M1841.600 274.600v19" stroke-width="1.100" stroke-dasharray="3.500 1.200 1 1.200"/><path d="M1847.200 293.500v-3h7" stroke-width="1.200"/>
<circle cx="1842.800" cy="328.800" r="7.600" stroke-width="1.800"/><circle cx="1842.800" cy="328.800" r="3.900" fill="#e0e0e0" stroke="none"/><path d="M1842.800 318.300v3M1842.800 336.300v3M1832.300 328.800h3M1850.300 328.800h3" stroke-width="1.700"/>
<circle cx="1842.800" cy="372.900" r="12.300" stroke-width="1.300"/><path d="M1837.400 379.800v-13.400c3-1.500 5.500-1.300 7.500-.3s3.700 1 5.800.2v8c-2.100.9-3.800.8-5.800-.2s-4.500-1.200-7.500.3" stroke-width="1.300"/>
<path d="M1828.200 425.900l30.100-16.400M1828.500 435.700l29.800-16.200M1837.700 414.300l18.900 10.200M1829.600 419.800l18.900 10.900" stroke-width="1.100"/>
<text x="1828.300" y="419" font-family="Liberation Sans, sans-serif" font-size="6.500" font-weight="bold" fill="#e0e0e0" stroke="none">1</text><text x="1838" y="412.500" font-family="Liberation Sans, sans-serif" font-size="6.500" font-weight="bold" fill="#e0e0e0" stroke="none">2</text>
<rect x="1831.4" y="459.6" width="23.4" height="22.7" stroke-width="1.200" stroke-dasharray="2 1.250" stroke="#f0f0f0"/>
<path d="M1842.800 464.300l5.600 3.200v6.500l-5.600 3.200l-5.600-3.200v-6.500zM1837.200 467.500l5.600 3.200l5.600-3.200M1842.800 470.700v6.500" stroke-width="1.200"/>
<rect x="1831.4" y="503.2" width="23.4" height="23.0" stroke-width="1.200" stroke-dasharray="2 1.250" stroke="#f0f0f0"/>
<g transform="translate(1835.200 506.800) scale(0.667)"><path d="M12 4.500C7 4.500 2.730 7.610 1 12c1.730 4.390 6 7.500 11 7.500s9.270-3.110 11-7.500c-1.730-4.390-6-7.500-11-7.500zM12 17c-2.760 0-5-2.240-5-5s2.240-5 5-5 5 2.240 5 5-2.240 5-5 5zm0-8c-1.660 0-3 1.340-3 3s1.340 3 3 3 3-1.340 3-3-1.340-3-3-3z" fill="#e0e0e0" stroke="none"/></g>
<rect x="1831.4" y="547.6" width="23.4" height="22.8" stroke-width="1.200" stroke-dasharray="2 1.250" stroke="#f0f0f0"/>
<g transform="translate(1835.200 551.100) scale(0.667)"><path d="M12 4.500C7 4.500 2.730 7.610 1 12c1.730 4.390 6 7.500 11 7.500s9.270-3.110 11-7.500c-1.730-4.390-6-7.500-11-7.500zM12 17c-2.760 0-5-2.240-5-5s2.240-5 5-5 5 2.240 5 5-2.240 5-5 5zm0-8c-1.660 0-3 1.340-3 3s1.340 3 3 3 3-1.340 3-3-1.340-3-3-3z" fill="#e0e0e0" stroke="none"/></g>
<path d="M1837 552.400l12.600 13.800" stroke="#535353" stroke-width="3.200"/><path d="M1836.600 552.200l12.800 14" stroke-width="1.400"/>
<rect x="1831.4" y="591.6" width="23.4" height="22.6" stroke-width="1.200" stroke-dasharray="2 1.250" stroke="#f0f0f0"/>
<rect x="1841.100" y="600.900" width="16" height="16" fill="#dcdcdc" stroke="none"/><path d="M1845.200 605l7.800 7.800M1853 605l-7.800 7.800" stroke="#444" stroke-width="1.300"/>
<rect x="1827" y="636" width="32" height="32" fill="#8c8c8c" stroke="none"/>
<path d="M1831.300 643.800l11.500 2.400v18.300l-9.100-6.900z" fill="#e2e2e2" stroke="#e2e2e2" stroke-width="1" stroke-linejoin="round"/>
<path d="M1831.300 643.800l12-3.500l11.600 3l-12.100 2.900z" fill="#7a7a7a" stroke="#e2e2e2" stroke-width="1.200" stroke-linejoin="round"/>
<path d="M1842.800 646.200l12.100-2.900l-1.700 14.600l-10.400 6.600z" fill="#777" stroke="#e2e2e2" stroke-width="1.200" stroke-linejoin="round"/>
<rect x="1827" y="680" width="32" height="32" fill="#8c8c8c" stroke="none"/>
<ellipse cx="1843.200" cy="695.900" rx="11.100" ry="4.800" stroke-width="1.900"/><ellipse cx="1843.200" cy="695.900" rx="4.400" ry="10.300" stroke-width="1.900"/><path d="M1843.200 693v3.200l-2.600 2.800M1843.200 696.200l2.600 2.800" stroke-width="0.900"/>
<path d="M1827.200 800.200v4.600h4.600z" fill="#fff" stroke="none"/>
</svg>
<div style="left:1861px;top:0;width:2px;height:813px;background:#000"></div>

<!--BLD--><svg id="bld" style="left:1040px;top:140px" width="370" height="250" viewBox="1040 140 370 250" shape-rendering="geometricPrecision">
<path d="M1064.0 254.0 v14.0" stroke="#8b8c8c" stroke-width="1.3"/>
<path d="M1064.9 254.0 v14.0" stroke="#5c5d5d" stroke-width="0.7"/>
<path d="M1066.3 255.3 v14.2" stroke="#8b8c8c" stroke-width="1.3"/>
<path d="M1067.2 255.3 v14.2" stroke="#5c5d5d" stroke-width="0.7"/>
<path d="M1069.5 257.1 v14.4" stroke="#8b8c8c" stroke-width="1.3"/>
<path d="M1070.4 257.1 v14.4" stroke="#5c5d5d" stroke-width="0.7"/>
<path d="M1073.1 259.1 v14.6" stroke="#8b8c8c" stroke-width="1.3"/>
<path d="M1074.0 259.1 v14.6" stroke="#5c5d5d" stroke-width="0.7"/>
<path d="M1077.0 261.3 v14.9" stroke="#8b8c8c" stroke-width="1.3"/>
<path d="M1077.9 261.3 v14.9" stroke="#5c5d5d" stroke-width="0.7"/>
<path d="M1081.2 263.6 v15.1" stroke="#8b8c8c" stroke-width="1.3"/>
<path d="M1082.1 263.6 v15.1" stroke="#5c5d5d" stroke-width="0.7"/>
<path d="M1085.6 266.1 v15.4" stroke="#8b8c8c" stroke-width="1.4"/>
<path d="M1086.5 266.1 v15.4" stroke="#5c5d5d" stroke-width="0.7"/>
<path d="M1090.2 268.7 v15.7" stroke="#8b8c8c" stroke-width="1.4"/>
<path d="M1091.1 268.7 v15.7" stroke="#5c5d5d" stroke-width="0.7"/>
<path d="M1095.0 271.4 v16.0" stroke="#8b8c8c" stroke-width="1.4"/>
<path d="M1095.9 271.4 v16.0" stroke="#5c5d5d" stroke-width="0.7"/>
<path d="M1099.9 274.1 v16.4" stroke="#8b8c8c" stroke-width="1.4"/>
<path d="M1100.8 274.1 v16.4" stroke="#5c5d5d" stroke-width="0.7"/>
<path d="M1104.9 276.9 v16.7" stroke="#8b8c8c" stroke-width="1.4"/>
<path d="M1105.9 276.9 v16.7" stroke="#5c5d5d" stroke-width="0.7"/>
<path d="M1110.1 279.8 v17.0" stroke="#8b8c8c" stroke-width="1.4"/>
<path d="M1111.1 279.8 v17.0" stroke="#5c5d5d" stroke-width="0.7"/>
<path d="M1115.4 282.8 v17.4" stroke="#8b8c8c" stroke-width="1.4"/>
<path d="M1116.4 282.8 v17.4" stroke="#5c5d5d" stroke-width="0.7"/>
<path d="M1120.8 285.8 v17.7" stroke="#8b8c8c" stroke-width="1.5"/>
<path d="M1121.8 285.8 v17.7" stroke="#5c5d5d" stroke-width="0.7"/>
<path d="M1126.3 288.9 v18.1" stroke="#8b8c8c" stroke-width="1.5"/>
<path d="M1127.3 288.9 v18.1" stroke="#5c5d5d" stroke-width="0.7"/>
<path d="M1131.9 292.1 v18.5" stroke="#8b8c8c" stroke-width="1.5"/>
<path d="M1132.9 292.1 v18.5" stroke="#5c5d5d" stroke-width="0.7"/>
<path d="M1137.6 295.3 v18.9" stroke="#8b8c8c" stroke-width="1.5"/>
<path d="M1138.7 295.3 v18.9" stroke="#5c5d5d" stroke-width="0.7"/>
<path d="M1143.4 298.5 v19.2" stroke="#8b8c8c" stroke-width="1.5"/>
<path d="M1144.5 298.5 v19.2" stroke="#5c5d5d" stroke-width="0.7"/>
<path d="M1149.3 301.8 v19.6" stroke="#8b8c8c" stroke-width="1.5"/>
<path d="M1150.4 301.8 v19.6" stroke="#5c5d5d" stroke-width="0.7"/>
<path d="M1155.3 305.2 v20.0" stroke="#8b8c8c" stroke-width="1.6"/>
<path d="M1156.3 305.2 v20.0" stroke="#5c5d5d" stroke-width="0.7"/>
<path d="M1161.3 308.5 v20.4" stroke="#8b8c8c" stroke-width="1.6"/>
<path d="M1162.4 308.5 v20.4" stroke="#5c5d5d" stroke-width="0.7"/>
<path d="M1167.4 312.0 v20.8" stroke="#8b8c8c" stroke-width="1.6"/>
<path d="M1168.5 312.0 v20.8" stroke="#5c5d5d" stroke-width="0.7"/>
<path d="M1173.6 315.4 v21.2" stroke="#8b8c8c" stroke-width="1.6"/>
<path d="M1174.7 315.4 v21.2" stroke="#5c5d5d" stroke-width="0.7"/>
<path d="M1179.9 319.0 v21.6" stroke="#8b8c8c" stroke-width="1.6"/>
<path d="M1181.0 319.0 v21.6" stroke="#5c5d5d" stroke-width="0.7"/>
<path d="M1186.2 322.5 v22.1" stroke="#8b8c8c" stroke-width="1.6"/>
<path d="M1187.3 322.5 v22.1" stroke="#5c5d5d" stroke-width="0.7"/>
<path d="M1192.6 326.1 v22.5" stroke="#8b8c8c" stroke-width="1.7"/>
<path d="M1193.7 326.1 v22.5" stroke="#5c5d5d" stroke-width="0.7"/>
<path d="M1199.1 329.7 v22.9" stroke="#8b8c8c" stroke-width="1.7"/>
<path d="M1200.2 329.7 v22.9" stroke="#5c5d5d" stroke-width="0.7"/>
<path d="M1205.6 333.4 v23.3" stroke="#8b8c8c" stroke-width="1.7"/>
<path d="M1206.8 333.4 v23.3" stroke="#5c5d5d" stroke-width="0.7"/>
<path d="M1212.2 337.1 v23.8" stroke="#8b8c8c" stroke-width="1.7"/>
<path d="M1213.4 337.1 v23.8" stroke="#5c5d5d" stroke-width="0.7"/>
<path d="M1218.9 340.8 v24.2" stroke="#8b8c8c" stroke-width="1.7"/>
<path d="M1220.0 340.8 v24.2" stroke="#5c5d5d" stroke-width="0.7"/>
<path d="M1225.6 344.5 v24.7" stroke="#8b8c8c" stroke-width="1.7"/>
<path d="M1226.7 344.5 v24.7" stroke="#5c5d5d" stroke-width="0.7"/>
<path d="M1232.3 348.3 v25.1" stroke="#8b8c8c" stroke-width="1.8"/>
<path d="M1233.5 348.3 v25.1" stroke="#5c5d5d" stroke-width="0.7"/>
<path d="M1239.1 352.2 v25.5" stroke="#8b8c8c" stroke-width="1.8"/>
<path d="M1240.3 352.2 v25.5" stroke="#5c5d5d" stroke-width="0.7"/>
<path d="M1246.0 356.0 v26.0" stroke="#8b8c8c" stroke-width="1.8"/>
<path d="M1247.2 356.0 v26.0" stroke="#5c5d5d" stroke-width="0.7"/>
<path d="M1070.0 260.0 v10.0" stroke="#8b8c8c" stroke-width="1.3"/>
<path d="M1070.9 260.0 v10.0" stroke="#5c5d5d" stroke-width="0.7"/>
<path d="M1074.4 262.5 v10.3" stroke="#8b8c8c" stroke-width="1.3"/>
<path d="M1075.3 262.5 v10.3" stroke="#5c5d5d" stroke-width="0.7"/>
<path d="M1080.1 265.8 v10.7" stroke="#8b8c8c" stroke-width="1.3"/>
<path d="M1081.0 265.8 v10.7" stroke="#5c5d5d" stroke-width="0.7"/>
<path d="M1086.5 269.5 v11.2" stroke="#8b8c8c" stroke-width="1.3"/>
<path d="M1087.4 269.5 v11.2" stroke="#5c5d5d" stroke-width="0.7"/>
<path d="M1093.2 273.4 v11.6" stroke="#8b8c8c" stroke-width="1.4"/>
<path d="M1094.2 273.4 v11.6" stroke="#5c5d5d" stroke-width="0.7"/>
<path d="M1100.4 277.5 v12.1" stroke="#8b8c8c" stroke-width="1.4"/>
<path d="M1101.3 277.5 v12.1" stroke="#5c5d5d" stroke-width="0.7"/>
<path d="M1107.8 281.8 v12.7" stroke="#8b8c8c" stroke-width="1.4"/>
<path d="M1108.8 281.8 v12.7" stroke="#5c5d5d" stroke-width="0.7"/>
<path d="M1115.5 286.2 v13.2" stroke="#8b8c8c" stroke-width="1.4"/>
<path d="M1116.5 286.2 v13.2" stroke="#5c5d5d" stroke-width="0.7"/>
<path d="M1123.4 290.8 v13.8" stroke="#8b8c8c" stroke-width="1.5"/>
<path d="M1124.4 290.8 v13.8" stroke="#5c5d5d" stroke-width="0.7"/>
<path d="M1131.5 295.5 v14.3" stroke="#8b8c8c" stroke-width="1.5"/>
<path d="M1132.5 295.5 v14.3" stroke="#5c5d5d" stroke-width="0.7"/>
<path d="M1139.8 300.2 v14.9" stroke="#8b8c8c" stroke-width="1.5"/>
<path d="M1140.8 300.2 v14.9" stroke="#5c5d5d" stroke-width="0.7"/>
<path d="M1148.2 305.1 v15.5" stroke="#8b8c8c" stroke-width="1.5"/>
<path d="M1149.3 305.1 v15.5" stroke="#5c5d5d" stroke-width="0.7"/>
<path d="M1156.9 310.1 v16.1" stroke="#8b8c8c" stroke-width="1.6"/>
<path d="M1157.9 310.1 v16.1" stroke="#5c5d5d" stroke-width="0.7"/>
<path d="M1165.6 315.1 v16.7" stroke="#8b8c8c" stroke-width="1.6"/>
<path d="M1166.7 315.1 v16.7" stroke="#5c5d5d" stroke-width="0.7"/>
<path d="M1174.5 320.2 v17.4" stroke="#8b8c8c" stroke-width="1.6"/>
<path d="M1175.6 320.2 v17.4" stroke="#5c5d5d" stroke-width="0.7"/>
<path d="M1183.5 325.4 v18.0" stroke="#8b8c8c" stroke-width="1.6"/>
<path d="M1184.6 325.4 v18.0" stroke="#5c5d5d" stroke-width="0.7"/>
<path d="M1192.7 330.7 v18.7" stroke="#8b8c8c" stroke-width="1.7"/>
<path d="M1193.8 330.7 v18.7" stroke="#5c5d5d" stroke-width="0.7"/>
<path d="M1201.9 336.1 v19.3" stroke="#8b8c8c" stroke-width="1.7"/>
<path d="M1203.1 336.1 v19.3" stroke="#5c5d5d" stroke-width="0.7"/>
<path d="M1211.3 341.4 v20.0" stroke="#8b8c8c" stroke-width="1.7"/>
<path d="M1212.4 341.4 v20.0" stroke="#5c5d5d" stroke-width="0.7"/>
<path d="M1220.8 346.9 v20.6" stroke="#8b8c8c" stroke-width="1.7"/>
<path d="M1221.9 346.9 v20.6" stroke="#5c5d5d" stroke-width="0.7"/>
<path d="M1230.3 352.4 v21.3" stroke="#8b8c8c" stroke-width="1.8"/>
<path d="M1231.5 352.4 v21.3" stroke="#5c5d5d" stroke-width="0.7"/>
<path d="M1240.0 358.0 v22.0" stroke="#8b8c8c" stroke-width="1.8"/>
<path d="M1241.2 358.0 v22.0" stroke="#5c5d5d" stroke-width="0.7"/>
<path d="M1256.0 355.0 v24.0" stroke="#8b8c8c" stroke-width="1.3"/>
<path d="M1256.9 355.0 v24.0" stroke="#5c5d5d" stroke-width="0.7"/>
<path d="M1261.9 350.3 v23.3" stroke="#8b8c8c" stroke-width="1.3"/>
<path d="M1262.8 350.3 v23.3" stroke="#5c5d5d" stroke-width="0.7"/>
<path d="M1267.8 345.5 v22.5" stroke="#8b8c8c" stroke-width="1.4"/>
<path d="M1268.8 345.5 v22.5" stroke="#5c5d5d" stroke-width="0.7"/>
<path d="M1273.7 340.8 v21.8" stroke="#8b8c8c" stroke-width="1.4"/>
<path d="M1274.7 340.8 v21.8" stroke="#5c5d5d" stroke-width="0.7"/>
<path d="M1279.6 336.1 v21.1" stroke="#8b8c8c" stroke-width="1.5"/>
<path d="M1280.6 336.1 v21.1" stroke="#5c5d5d" stroke-width="0.7"/>
<path d="M1285.5 331.4 v20.4" stroke="#8b8c8c" stroke-width="1.5"/>
<path d="M1286.6 331.4 v20.4" stroke="#5c5d5d" stroke-width="0.7"/>
<path d="M1291.5 326.6 v19.6" stroke="#8b8c8c" stroke-width="1.6"/>
<path d="M1292.5 326.6 v19.6" stroke="#5c5d5d" stroke-width="0.7"/>
<path d="M1297.4 321.9 v18.9" stroke="#8b8c8c" stroke-width="1.6"/>
<path d="M1298.5 321.9 v18.9" stroke="#5c5d5d" stroke-width="0.7"/>
<path d="M1303.3 317.2 v18.2" stroke="#8b8c8c" stroke-width="1.7"/>
<path d="M1304.4 317.2 v18.2" stroke="#5c5d5d" stroke-width="0.7"/>
<path d="M1309.2 312.5 v17.5" stroke="#8b8c8c" stroke-width="1.7"/>
<path d="M1310.3 312.5 v17.5" stroke="#5c5d5d" stroke-width="0.7"/>
<path d="M1315.1 307.7 v16.7" stroke="#8b8c8c" stroke-width="1.8"/>
<path d="M1316.3 307.7 v16.7" stroke="#5c5d5d" stroke-width="0.7"/>
<path d="M1321.0 303.0 v16.0" stroke="#8b8c8c" stroke-width="1.8"/>
<path d="M1322.2 303.0 v16.0" stroke="#5c5d5d" stroke-width="0.7"/>
<path d="M1262.0 354.0 v18.0" stroke="#8b8c8c" stroke-width="1.3"/>
<path d="M1262.9 354.0 v18.0" stroke="#5c5d5d" stroke-width="0.7"/>
<path d="M1270.0 347.7 v17.1" stroke="#8b8c8c" stroke-width="1.4"/>
<path d="M1270.9 347.7 v17.1" stroke="#5c5d5d" stroke-width="0.7"/>
<path d="M1278.0 341.4 v16.3" stroke="#8b8c8c" stroke-width="1.4"/>
<path d="M1279.0 341.4 v16.3" stroke="#5c5d5d" stroke-width="0.7"/>
<path d="M1286.0 335.1 v15.4" stroke="#8b8c8c" stroke-width="1.5"/>
<path d="M1287.0 335.1 v15.4" stroke="#5c5d5d" stroke-width="0.7"/>
<path d="M1294.0 328.9 v14.6" stroke="#8b8c8c" stroke-width="1.6"/>
<path d="M1295.1 328.9 v14.6" stroke="#5c5d5d" stroke-width="0.7"/>
<path d="M1302.0 322.6 v13.7" stroke="#8b8c8c" stroke-width="1.7"/>
<path d="M1303.1 322.6 v13.7" stroke="#5c5d5d" stroke-width="0.7"/>
<path d="M1310.0 316.3 v12.9" stroke="#8b8c8c" stroke-width="1.7"/>
<path d="M1311.2 316.3 v12.9" stroke="#5c5d5d" stroke-width="0.7"/>
<path d="M1318.0 310.0 v12.0" stroke="#8b8c8c" stroke-width="1.8"/>
<path d="M1319.2 310.0 v12.0" stroke="#5c5d5d" stroke-width="0.7"/>
<path d="M1330.0 291.0 v26.0" stroke="#8b8c8c" stroke-width="1.3"/>
<path d="M1330.9 291.0 v26.0" stroke="#5c5d5d" stroke-width="0.7"/>
<path d="M1335.5 287.8 v24.5" stroke="#8b8c8c" stroke-width="1.4"/>
<path d="M1336.5 287.8 v24.5" stroke="#5c5d5d" stroke-width="0.7"/>
<path d="M1341.0 284.5 v23.0" stroke="#8b8c8c" stroke-width="1.6"/>
<path d="M1342.1 284.5 v23.0" stroke="#5c5d5d" stroke-width="0.7"/>
<path d="M1346.5 281.2 v21.5" stroke="#8b8c8c" stroke-width="1.7"/>
<path d="M1347.6 281.2 v21.5" stroke="#5c5d5d" stroke-width="0.7"/>
<path d="M1352.0 278.0 v20.0" stroke="#8b8c8c" stroke-width="1.8"/>
<path d="M1353.2 278.0 v20.0" stroke="#5c5d5d" stroke-width="0.7"/>
<path d="M1347.0 266.0 v22.0" stroke="#8b8c8c" stroke-width="1.0"/>
<path d="M1347.9 266.0 v22.0" stroke="#5c5d5d" stroke-width="0.7"/>
<path d="M1350.9 264.1 v20.7" stroke="#8b8c8c" stroke-width="1.0"/>
<path d="M1351.8 264.1 v20.7" stroke="#5c5d5d" stroke-width="0.7"/>
<path d="M1354.8 262.2 v19.5" stroke="#8b8c8c" stroke-width="1.1"/>
<path d="M1355.8 262.2 v19.5" stroke="#5c5d5d" stroke-width="0.7"/>
<path d="M1358.7 260.3 v18.2" stroke="#8b8c8c" stroke-width="1.1"/>
<path d="M1359.7 260.3 v18.2" stroke="#5c5d5d" stroke-width="0.7"/>
<path d="M1362.6 258.4 v16.9" stroke="#8b8c8c" stroke-width="1.2"/>
<path d="M1363.6 258.4 v16.9" stroke="#5c5d5d" stroke-width="0.7"/>
<path d="M1366.5 256.5 v15.6" stroke="#8b8c8c" stroke-width="1.2"/>
<path d="M1367.6 256.5 v15.6" stroke="#5c5d5d" stroke-width="0.7"/>
<path d="M1370.5 254.5 v14.4" stroke="#8b8c8c" stroke-width="1.3"/>
<path d="M1371.5 254.5 v14.4" stroke="#5c5d5d" stroke-width="0.7"/>
<path d="M1374.4 252.6 v13.1" stroke="#8b8c8c" stroke-width="1.3"/>
<path d="M1375.5 252.6 v13.1" stroke="#5c5d5d" stroke-width="0.7"/>
<path d="M1378.3 250.7 v11.8" stroke="#8b8c8c" stroke-width="1.4"/>
<path d="M1379.4 250.7 v11.8" stroke="#5c5d5d" stroke-width="0.7"/>
<path d="M1382.2 248.8 v10.5" stroke="#8b8c8c" stroke-width="1.4"/>
<path d="M1383.3 248.8 v10.5" stroke="#5c5d5d" stroke-width="0.7"/>
<path d="M1386.1 246.9 v9.3" stroke="#8b8c8c" stroke-width="1.5"/>
<path d="M1387.3 246.9 v9.3" stroke="#5c5d5d" stroke-width="0.7"/>
<path d="M1390.0 245.0 v8.0" stroke="#8b8c8c" stroke-width="1.5"/>
<path d="M1391.2 245.0 v8.0" stroke="#5c5d5d" stroke-width="0.7"/>
<path d="M1350.0 260.0 v14.0" stroke="#8b8c8c" stroke-width="1.0"/>
<path d="M1350.9 260.0 v14.0" stroke="#5c5d5d" stroke-width="0.7"/>
<path d="M1354.7 257.6 v13.1" stroke="#8b8c8c" stroke-width="1.1"/>
<path d="M1355.6 257.6 v13.1" stroke="#5c5d5d" stroke-width="0.7"/>
<path d="M1359.3 255.1 v12.2" stroke="#8b8c8c" stroke-width="1.1"/>
<path d="M1360.3 255.1 v12.2" stroke="#5c5d5d" stroke-width="0.7"/>
<path d="M1364.0 252.7 v11.3" stroke="#8b8c8c" stroke-width="1.2"/>
<path d="M1365.0 252.7 v11.3" stroke="#5c5d5d" stroke-width="0.7"/>
<path d="M1368.7 250.2 v10.4" stroke="#8b8c8c" stroke-width="1.2"/>
<path d="M1369.7 250.2 v10.4" stroke="#5c5d5d" stroke-width="0.7"/>
<path d="M1373.3 247.8 v9.6" stroke="#8b8c8c" stroke-width="1.3"/>
<path d="M1374.4 247.8 v9.6" stroke="#5c5d5d" stroke-width="0.7"/>
<path d="M1378.0 245.3 v8.7" stroke="#8b8c8c" stroke-width="1.3"/>
<path d="M1379.1 245.3 v8.7" stroke="#5c5d5d" stroke-width="0.7"/>
<path d="M1382.7 242.9 v7.8" stroke="#8b8c8c" stroke-width="1.4"/>
<path d="M1383.8 242.9 v7.8" stroke="#5c5d5d" stroke-width="0.7"/>
<path d="M1387.3 240.4 v6.9" stroke="#8b8c8c" stroke-width="1.4"/>
<path d="M1388.5 240.4 v6.9" stroke="#5c5d5d" stroke-width="0.7"/>
<path d="M1392.0 238.0 v6.0" stroke="#8b8c8c" stroke-width="1.5"/>
<path d="M1393.2 238.0 v6.0" stroke="#5c5d5d" stroke-width="0.7"/>
<path d="M1060.7 243.4L1251.5 340.0L1249.5 360.7L1062.0 256.0z" fill="#424547" stroke="#222" stroke-width="0.50" />
<path d="M1060.7 243.4L1251.5 340.0L1251.3 344.0L1060.9 246.5z" fill="#5f6264" />
<path d="M1061.5 250.5L1250.0 352.0" fill="none" stroke="#5d6061" stroke-width="1.20" />
<path d="M1251.5 340.0L1323.0 285.0L1322.5 301.7L1249.5 360.7z" fill="#565959" stroke="#222" stroke-width="0.50" />
<path d="M1251.5 340.0L1323.0 285.0L1323.0 288.5L1251.3 344.0z" fill="#737677" />
<path d="M1327.0 266.0L1392.0 231.5L1392.0 247.0L1346.0 272.0L1327.0 275.0z" fill="#6e7071" />
<path d="M1328.0 270.0L1392.0 237.0" fill="none" stroke="#8d8f90" stroke-width="1.00" stroke-dasharray="1 1.5"/>
<path d="M1330.0 274.0L1392.0 242.0" fill="none" stroke="#8d8f90" stroke-width="1.00" stroke-dasharray="1 1.5"/>
<path d="M1053.4 188.2L1251.5 252.7L1251.5 340.0L1060.7 243.4z" fill="#e2743f" stroke="#6e2a10" stroke-width="0.90" />
<path d="M1055.0 193.5L1058.4 194.7L1064.7 243.9L1061.4 242.2z" fill="#2f2e2f" />
<path d="M1060.1 195.2L1064.5 196.7L1070.5 246.8L1066.4 244.7z" fill="#2f2e2f" />
<path d="M1066.4 197.4L1071.2 199.0L1077.1 250.1L1072.4 247.7z" fill="#2f2e2f" />
<path d="M1073.4 199.8L1078.5 201.5L1084.1 253.6L1079.1 251.1z" fill="#2f2e2f" />
<path d="M1080.8 202.3L1086.2 204.1L1091.6 257.3L1086.3 254.7z" fill="#2f2e2f" />
<path d="M1088.6 205.0L1094.3 206.9L1099.4 261.2L1093.9 258.5z" fill="#2f2e2f" />
<path d="M1096.7 207.7L1102.6 209.7L1107.5 265.3L1101.8 262.4z" fill="#2f2e2f" />
<path d="M1105.2 210.6L1111.3 212.7L1115.8 269.5L1110.0 266.5z" fill="#2f2e2f" />
<path d="M1113.9 213.6L1120.1 215.7L1124.4 273.8L1118.4 270.7z" fill="#2f2e2f" />
<path d="M1122.8 216.6L1129.2 218.8L1133.2 278.2L1127.0 275.1z" fill="#2f2e2f" />
<path d="M1132.0 219.8L1138.5 222.0L1142.2 282.7L1135.9 279.5z" fill="#2f2e2f" />
<path d="M1141.4 223.0L1148.0 225.2L1151.4 287.3L1144.9 284.0z" fill="#2f2e2f" />
<path d="M1150.9 226.2L1157.7 228.5L1160.7 291.9L1154.2 288.7z" fill="#2f2e2f" />
<path d="M1160.6 229.5L1167.5 231.9L1170.2 296.7L1163.6 293.4z" fill="#2f2e2f" />
<path d="M1170.5 232.9L1177.5 235.3L1179.9 301.5L1173.1 298.1z" fill="#2f2e2f" />
<path d="M1180.5 236.3L1187.6 238.8L1189.7 306.4L1182.8 303.0z" fill="#2f2e2f" />
<path d="M1190.7 239.8L1197.9 242.3L1199.6 311.4L1192.7 307.9z" fill="#2f2e2f" />
<path d="M1201.0 243.3L1208.3 245.8L1209.7 316.5L1202.7 312.9z" fill="#2f2e2f" />
<path d="M1211.5 246.9L1218.8 249.4L1219.9 321.6L1212.8 318.0z" fill="#2f2e2f" />
<path d="M1222.0 250.5L1229.5 253.0L1230.2 326.7L1223.0 323.1z" fill="#2f2e2f" />
<path d="M1232.7 254.1L1240.3 256.7L1240.6 331.9L1233.3 328.3z" fill="#2f2e2f" />
<path d="M1102.0 204.0L1106.9 205.6L1112.2 269.5L1107.5 267.1z" fill="#e2743f" />
<path d="M1147.5 218.8L1153.0 220.6L1156.6 292.0L1151.3 289.3z" fill="#e2743f" />
<path d="M1197.5 235.1L1203.5 237.1L1205.2 316.6L1199.5 313.7z" fill="#e2743f" />
<path d="M1083.2 215.2L1086.6 216.5L1087.3 223.7L1084.0 222.4z" fill="#cfd2dc" opacity="0.46"/>
<path d="M1084.8 230.2L1088.1 231.5L1088.9 239.4L1085.6 237.9z" fill="#cfd2dc" opacity="0.46"/>
<path d="M1086.4 245.1L1089.6 246.6L1090.4 253.8L1087.1 252.3z" fill="#cfd2dc" opacity="0.46"/>
<path d="M1091.1 218.2L1094.5 219.5L1095.2 226.9L1091.8 225.5z" fill="#cfd2dc" opacity="0.49"/>
<path d="M1092.5 233.4L1096.0 234.9L1096.7 242.9L1093.3 241.4z" fill="#cfd2dc" opacity="0.49"/>
<path d="M1094.0 248.7L1097.4 250.3L1098.1 257.7L1094.8 256.0z" fill="#cfd2dc" opacity="0.49"/>
<path d="M1099.2 221.3L1102.8 222.6L1103.4 230.2L1099.9 228.7z" fill="#cfd2dc" opacity="0.51"/>
<path d="M1100.6 236.8L1104.2 238.3L1104.9 246.5L1101.3 244.9z" fill="#cfd2dc" opacity="0.51"/>
<path d="M1102.0 252.4L1105.6 254.1L1106.2 261.6L1102.7 259.9z" fill="#cfd2dc" opacity="0.51"/>
<path d="M1109.3 225.1L1111.3 225.8L1111.9 233.6L1110.0 232.8z" fill="#cfd2dc" opacity="0.54"/>
<path d="M1110.7 241.1L1112.6 241.9L1113.3 250.3L1111.3 249.4z" fill="#cfd2dc" opacity="0.54"/>
<path d="M1112.0 257.1L1113.9 258.0L1114.6 265.7L1112.6 264.8z" fill="#cfd2dc" opacity="0.54"/>
<path d="M1116.3 227.7L1120.1 229.2L1120.7 237.1L1116.9 235.5z" fill="#cfd2dc" opacity="0.57"/>
<path d="M1117.5 244.0L1121.3 245.6L1122.0 254.2L1118.2 252.5z" fill="#cfd2dc" opacity="0.57"/>
<path d="M1118.8 260.3L1122.5 262.1L1123.1 269.9L1119.4 268.1z" fill="#cfd2dc" opacity="0.57"/>
<path d="M1125.2 231.1L1129.1 232.6L1129.6 240.6L1125.8 239.1z" fill="#cfd2dc" opacity="0.60"/>
<path d="M1126.4 247.7L1130.2 249.4L1130.8 258.1L1127.0 256.4z" fill="#cfd2dc" opacity="0.60"/>
<path d="M1127.5 264.4L1131.4 266.2L1131.9 274.3L1128.1 272.4z" fill="#cfd2dc" opacity="0.60"/>
<path d="M1134.3 234.5L1138.3 236.1L1138.8 244.3L1134.8 242.7z" fill="#cfd2dc" opacity="0.62"/>
<path d="M1135.4 251.6L1139.3 253.2L1139.9 262.2L1136.0 260.4z" fill="#cfd2dc" opacity="0.62"/>
<path d="M1136.5 268.6L1140.4 270.4L1140.9 278.7L1137.0 276.8z" fill="#cfd2dc" opacity="0.62"/>
<path d="M1143.6 238.1L1147.7 239.6L1148.1 248.0L1144.1 246.4z" fill="#cfd2dc" opacity="0.65"/>
<path d="M1144.6 255.5L1148.7 257.2L1149.2 266.3L1145.2 264.5z" fill="#cfd2dc" opacity="0.65"/>
<path d="M1145.6 272.9L1149.6 274.8L1150.1 283.2L1146.1 281.2z" fill="#cfd2dc" opacity="0.65"/>
<path d="M1155.0 242.4L1157.3 243.2L1157.7 251.9L1155.5 251.0z" fill="#cfd2dc" opacity="0.68"/>
<path d="M1155.9 260.3L1158.1 261.2L1158.6 270.5L1156.4 269.6z" fill="#cfd2dc" opacity="0.68"/>
<path d="M1156.8 278.1L1159.0 279.2L1159.4 287.8L1157.3 286.7z" fill="#cfd2dc" opacity="0.68"/>
<path d="M1162.8 245.3L1167.0 246.9L1167.4 255.7L1163.2 254.1z" fill="#cfd2dc" opacity="0.70"/>
<path d="M1163.6 263.5L1167.8 265.3L1168.2 274.8L1164.0 273.0z" fill="#cfd2dc" opacity="0.70"/>
<path d="M1164.4 281.7L1168.6 283.6L1168.9 292.5L1164.8 290.4z" fill="#cfd2dc" opacity="0.70"/>
<path d="M1172.6 249.0L1176.9 250.7L1177.2 259.7L1173.0 258.0z" fill="#cfd2dc" opacity="0.73"/>
<path d="M1173.3 267.6L1177.6 269.4L1177.9 279.2L1173.7 277.3z" fill="#cfd2dc" opacity="0.73"/>
<path d="M1174.1 286.2L1178.3 288.2L1178.6 297.2L1174.4 295.1z" fill="#cfd2dc" opacity="0.73"/>
<path d="M1182.6 252.8L1186.9 254.5L1187.2 263.7L1182.9 261.9z" fill="#cfd2dc" opacity="0.76"/>
<path d="M1183.2 271.8L1187.5 273.6L1187.8 283.6L1183.6 281.7z" fill="#cfd2dc" opacity="0.76"/>
<path d="M1183.9 290.8L1188.1 292.8L1188.4 302.0L1184.2 299.9z" fill="#cfd2dc" opacity="0.76"/>
<path d="M1192.7 256.6L1197.1 258.3L1197.3 267.7L1193.0 266.0z" fill="#cfd2dc" opacity="0.79"/>
<path d="M1193.2 276.1L1197.6 277.9L1197.9 288.1L1193.5 286.2z" fill="#cfd2dc" opacity="0.79"/>
<path d="M1193.8 295.5L1198.1 297.5L1198.3 306.9L1194.1 304.8z" fill="#cfd2dc" opacity="0.79"/>
<path d="M1205.0 261.3L1207.4 262.2L1207.6 271.8L1205.2 270.9z" fill="#cfd2dc" opacity="0.81"/>
<path d="M1205.4 281.2L1207.8 282.2L1208.0 292.6L1205.7 291.6z" fill="#cfd2dc" opacity="0.81"/>
<path d="M1205.9 301.1L1208.2 302.2L1208.4 311.8L1206.1 310.7z" fill="#cfd2dc" opacity="0.81"/>
<path d="M1213.3 264.4L1217.8 266.2L1218.0 276.0L1213.5 274.2z" fill="#cfd2dc" opacity="0.84"/>
<path d="M1213.7 284.7L1218.2 286.6L1218.3 297.2L1213.9 295.2z" fill="#cfd2dc" opacity="0.84"/>
<path d="M1214.0 305.0L1218.5 307.0L1218.6 316.9L1214.2 314.7z" fill="#cfd2dc" opacity="0.84"/>
<path d="M1223.8 268.4L1228.4 270.1L1228.5 280.2L1224.0 278.4z" fill="#cfd2dc" opacity="0.87"/>
<path d="M1224.1 289.1L1228.6 291.0L1228.7 301.9L1224.2 299.9z" fill="#cfd2dc" opacity="0.87"/>
<path d="M1224.4 309.8L1228.8 311.9L1228.9 321.9L1224.5 319.7z" fill="#cfd2dc" opacity="0.87"/>
<path d="M1234.5 272.4L1239.1 274.2L1239.1 284.4L1234.5 282.6z" fill="#cfd2dc" opacity="0.90"/>
<path d="M1234.6 293.6L1239.2 295.5L1239.3 306.6L1234.7 304.6z" fill="#cfd2dc" opacity="0.90"/>
<path d="M1234.8 314.7L1239.3 316.8L1239.4 327.1L1234.9 324.8z" fill="#cfd2dc" opacity="0.90"/>
<path d="M1220.7 287.7L1228.1 290.8L1228.5 325.0L1221.2 321.4z" fill="#3c3f40" />
<path d="M1056.4 208.2L1251.5 290.0L1251.5 293.2L1056.4 210.1z" fill="#d8d8d8" />
<path d="M1056.4 210.1L1251.5 293.2" fill="none" stroke="#6d6d6d" stroke-width="0.70" />
<path d="M1059.0 223.8L1251.5 315.0L1251.5 318.2L1059.0 225.7z" fill="#d8d8d8" />
<path d="M1059.0 225.7L1251.5 318.2" fill="none" stroke="#6d6d6d" stroke-width="0.70" />
<path d="M1053.8 191.0L1251.5 256.6" fill="none" stroke="#6e2a10" stroke-width="0.90" />
<path d="M1251.5 252.7L1280.3 241.5L1280.3 317.9L1251.5 340.0z" fill="#f08a5b" stroke="#6e2a10" stroke-width="0.90" />
<path d="M1280.3 212.9L1392.0 164.9L1392.0 232.0L1280.3 317.9z" fill="#f08a5b" stroke="#6e2a10" stroke-width="0.90" />
<path d="M1283.5 221.9L1289.5 219.1L1289.5 245.6L1283.5 248.9z" fill="#2f2e2f" />
<path d="M1292.5 217.7L1298.5 215.0L1298.5 240.6L1292.5 244.0z" fill="#2f2e2f" />
<path d="M1302.0 213.3L1308.0 210.6L1308.0 235.4L1302.0 238.7z" fill="#2f2e2f" />
<path d="M1283.5 255.2L1288.5 252.3L1288.5 309.5L1283.5 313.3z" fill="#3a3a3c" />
<path d="M1288.5 252.3L1291.5 250.6L1291.5 307.2L1288.5 309.5z" fill="#e2743f" />
<path d="M1292.5 250.0L1297.5 247.1L1297.5 302.7L1292.5 306.5z" fill="#3a3a3c" />
<path d="M1297.5 247.1L1300.5 245.4L1300.5 300.4L1297.5 302.7z" fill="#e2743f" />
<path d="M1302.0 244.6L1307.0 241.7L1307.0 295.4L1302.0 299.2z" fill="#3a3a3c" />
<path d="M1307.0 241.7L1310.0 240.0L1310.0 293.1L1307.0 295.4z" fill="#e2743f" />
<path d="M1311.5 206.1L1314.8 204.6L1314.8 288.5L1311.5 291.0z" fill="#323234" />
<path d="M1313.3 205.3L1314.8 204.6L1314.8 288.5L1313.3 289.7z" fill="#4a4c52" />
<path d="M1314.8 202.7L1315.6 202.4L1315.6 288.0L1314.8 288.5z" fill="#a44f28" />
<path d="M1316.5 203.8L1319.7 202.4L1319.7 284.8L1316.5 287.3z" fill="#323234" />
<path d="M1318.3 203.0L1319.7 202.4L1319.7 284.8L1318.3 285.9z" fill="#4a4c52" />
<path d="M1319.7 200.5L1320.5 200.2L1320.5 284.3L1319.7 284.8z" fill="#a44f28" />
<path d="M1321.4 201.6L1324.5 200.2L1324.5 281.2L1321.4 283.6z" fill="#323234" />
<path d="M1323.1 200.9L1324.5 200.2L1324.5 281.2L1323.1 282.3z" fill="#4a4c52" />
<path d="M1324.5 198.4L1325.2 198.1L1325.2 280.7L1324.5 281.2z" fill="#a44f28" />
<path d="M1326.1 199.5L1329.1 198.1L1329.1 277.7L1326.1 280.0z" fill="#323234" />
<path d="M1327.8 198.7L1329.1 198.1L1329.1 277.7L1327.8 278.7z" fill="#4a4c52" />
<path d="M1329.1 196.3L1329.8 196.0L1329.8 277.1L1329.1 277.7z" fill="#a44f28" />
<path d="M1330.7 197.4L1333.6 196.1L1333.6 274.3L1330.7 276.5z" fill="#323234" />
<path d="M1332.3 196.7L1333.6 196.1L1333.6 274.3L1332.3 275.3z" fill="#4a4c52" />
<path d="M1333.6 194.3L1334.3 194.0L1334.3 273.7L1333.6 274.3z" fill="#a44f28" />
<path d="M1335.2 195.4L1338.0 194.1L1338.0 270.9L1335.2 273.1z" fill="#323234" />
<path d="M1336.7 194.7L1338.0 194.1L1338.0 270.9L1336.7 271.9z" fill="#4a4c52" />
<path d="M1338.0 192.4L1338.7 192.1L1338.7 270.4L1338.0 270.9z" fill="#a44f28" />
<path d="M1339.5 193.4L1342.3 192.1L1342.3 267.7L1339.5 269.8z" fill="#323234" />
<path d="M1341.1 192.7L1342.3 192.1L1342.3 267.7L1341.1 268.6z" fill="#4a4c52" />
<path d="M1342.3 190.5L1343.0 190.2L1343.0 267.2L1342.3 267.7z" fill="#a44f28" />
<path d="M1343.8 191.5L1346.5 190.2L1346.5 264.5L1343.8 266.6z" fill="#323234" />
<path d="M1345.3 190.8L1346.5 190.2L1346.5 264.5L1345.3 265.4z" fill="#4a4c52" />
<path d="M1346.5 188.6L1347.1 188.3L1347.1 264.0L1346.5 264.5z" fill="#a44f28" />
<path d="M1347.9 189.6L1350.5 188.4L1350.5 261.5L1347.9 263.4z" fill="#323234" />
<path d="M1349.3 188.9L1350.5 188.4L1350.5 261.5L1349.3 262.4z" fill="#4a4c52" />
<path d="M1350.5 186.8L1351.1 186.5L1351.1 261.0L1350.5 261.5z" fill="#a44f28" />
<path d="M1351.9 187.8L1354.4 186.6L1354.4 258.5L1351.9 260.4z" fill="#323234" />
<path d="M1353.3 187.1L1354.4 186.6L1354.4 258.5L1353.3 259.3z" fill="#4a4c52" />
<path d="M1354.4 185.0L1355.1 184.8L1355.1 258.0L1354.4 258.5z" fill="#a44f28" />
<path d="M1355.8 186.0L1358.3 184.9L1358.3 255.6L1355.8 257.4z" fill="#323234" />
<path d="M1357.2 185.4L1358.3 184.9L1358.3 255.6L1357.2 256.4z" fill="#4a4c52" />
<path d="M1358.3 183.3L1358.9 183.1L1358.9 255.1L1358.3 255.6z" fill="#a44f28" />
<path d="M1359.6 184.3L1362.0 183.2L1362.0 252.7L1359.6 254.5z" fill="#323234" />
<path d="M1360.9 183.7L1362.0 183.2L1362.0 252.7L1360.9 253.6z" fill="#4a4c52" />
<path d="M1362.0 181.7L1362.6 181.4L1362.6 252.3L1362.0 252.7z" fill="#a44f28" />
<path d="M1363.3 182.6L1365.6 181.6L1365.6 250.0L1363.3 251.7z" fill="#323234" />
<path d="M1364.6 182.0L1365.6 181.6L1365.6 250.0L1364.6 250.8z" fill="#4a4c52" />
<path d="M1365.6 180.0L1366.2 179.8L1366.2 249.6L1365.6 250.0z" fill="#a44f28" />
<path d="M1366.9 181.0L1369.1 180.0L1369.1 247.3L1366.9 249.0z" fill="#323234" />
<path d="M1368.1 180.4L1369.1 180.0L1369.1 247.3L1368.1 248.1z" fill="#4a4c52" />
<path d="M1369.1 178.5L1369.7 178.2L1369.7 246.9L1369.1 247.3z" fill="#a44f28" />
<path d="M1370.4 179.4L1372.6 178.4L1372.6 244.7L1370.4 246.4z" fill="#323234" />
<path d="M1371.6 178.8L1372.6 178.4L1372.6 244.7L1371.6 245.5z" fill="#4a4c52" />
<path d="M1372.6 176.9L1373.1 176.7L1373.1 244.3L1372.6 244.7z" fill="#a44f28" />
<path d="M1373.8 177.8L1375.9 176.9L1375.9 242.2L1373.8 243.8z" fill="#323234" />
<path d="M1375.0 177.3L1375.9 176.9L1375.9 242.2L1375.0 242.9z" fill="#4a4c52" />
<path d="M1375.9 175.4L1376.5 175.2L1376.5 241.8L1375.9 242.2z" fill="#a44f28" />
<path d="M1377.1 176.3L1379.2 175.4L1379.2 239.7L1377.1 241.3z" fill="#323234" />
<path d="M1378.2 175.8L1379.2 175.4L1379.2 239.7L1378.2 240.4z" fill="#4a4c52" />
<path d="M1379.2 174.0L1379.7 173.8L1379.7 239.3L1379.2 239.7z" fill="#a44f28" />
<path d="M1380.3 174.9L1382.3 174.0L1382.3 237.3L1380.3 238.8z" fill="#323234" />
<path d="M1381.4 174.4L1382.3 174.0L1382.3 237.3L1381.4 238.0z" fill="#4a4c52" />
<path d="M1382.3 172.6L1382.8 172.3L1382.8 236.9L1382.3 237.3z" fill="#a44f28" />
<path d="M1383.5 173.5L1385.4 172.6L1385.4 235.0L1383.5 236.4z" fill="#323234" />
<path d="M1384.5 173.0L1385.4 172.6L1385.4 235.0L1384.5 235.7z" fill="#4a4c52" />
<path d="M1385.4 171.2L1385.9 171.0L1385.9 234.6L1385.4 235.0z" fill="#a44f28" />
<path d="M1386.5 172.1L1388.4 171.2L1388.4 232.7L1386.5 234.1z" fill="#323234" />
<path d="M1387.5 171.6L1388.4 171.2L1388.4 232.7L1387.5 233.4z" fill="#4a4c52" />
<path d="M1388.4 169.9L1388.9 169.6L1388.9 232.3L1388.4 232.7z" fill="#a44f28" />
<path d="M1392.0 164.9L1398.3 178.5L1398.3 228.0L1392.0 232.0z" fill="#d96f3e" stroke="#6e2a10" stroke-width="0.70" />
<path d="M1322.0 263.8L1346.0 245.4L1346.0 275.4L1322.0 291.8z" fill="#3d3f41" />
<path d="M1327.0 278.0L1333.0 273.4L1333.0 299.4L1327.0 306.0z" fill="#9a9b9b" />
<path d="M1328.5 276.0L1333.0 274.0L1333.0 283.0L1328.5 285.0z" fill="#e8e8e4" />
<path d="M1251.5 290.0L1397.0 198.5L1397.0 200.7L1251.5 293.2z" fill="#e0e0e0" />
<path d="M1251.5 293.2L1397.0 200.7" fill="none" stroke="#666" stroke-width="0.70" />
<path d="M1251.5 315.0L1397.0 216.5L1397.0 218.7L1251.5 318.2z" fill="#e0e0e0" />
<path d="M1251.5 318.2L1397.0 218.7" fill="none" stroke="#666" stroke-width="0.70" />
<path d="M1265.0 303.0L1290.0 288.5L1294.0 291.5L1269.0 306.5z" fill="#c9cbe0" stroke="#2a2a2a" stroke-width="0.80" />
<path d="M1265.0 303.0L1269.0 306.5L1269.0 309.0L1265.0 305.5z" fill="#444" />
<path d="M1269.0 306.5L1294.0 291.5L1294.0 294.0L1269.0 309.0z" fill="#3a3a3a" />
<path d="M1364.0 236.0L1376.0 230.0L1378.0 232.0L1366.0 238.5z" fill="#c9cbe0" stroke="#2a2a2a" stroke-width="0.70" />
<path d="M1076.0 247.5L1090.0 254.0L1088.5 256.0L1075.0 249.5z" fill="#555" stroke="#2a2a2a" stroke-width="0.50" />
<path d="M1251.5 252.7L1251.5 340.0" fill="none" stroke="#6e2a10" stroke-width="0.80" />
<path d="M1280.3 212.9L1280.3 317.9" fill="none" stroke="#6e2a10" stroke-width="0.80" />
<path d="M1273.0 331.0L1283.0 318.0L1290.0 322.0L1279.0 336.0z" fill="#77797c" />
<path d="M1080.0 256.0L1094.0 262.0L1088.0 268.0L1076.0 262.0z" fill="#6a6c6e" />
<path d="M1053.4 188.2L1192.0 160.5L1192.5 168.0L1196.0 228.0L1262.0 249.0L1251.5 252.7z" fill="#f28b5a" stroke="#6e2a10" stroke-width="0.90" />
<path d="M1072.7 190.6L1192.5 166.4L1193.0 186.0L1196.0 227.0L1260.0 247.2L1250.5 250.5L1195.0 231.5L1136.5 212.0L1075.0 192.0z" fill="#b3b4d2" />
<path d="M1085.0 191.5L1190.0 170.5" fill="none" stroke="#8a4a3a" stroke-width="0.70" stroke-dasharray="1.6 1.3" opacity="0.8"/>
<path d="M1100.0 196.5L1192.0 178.0" fill="none" stroke="#8a4a3a" stroke-width="0.70" stroke-dasharray="1.6 1.3" opacity="0.8"/>
<path d="M1118.0 203.0L1165.0 193.5" fill="none" stroke="#8a4a3a" stroke-width="0.70" stroke-dasharray="1.6 1.3" opacity="0.8"/>
<path d="M1140.0 210.0L1195.0 199.0" fill="none" stroke="#8a4a3a" stroke-width="0.70" stroke-dasharray="1.6 1.3" opacity="0.8"/>
<path d="M1100.0 189.0L1150.0 206.0" fill="none" stroke="#8a4a3a" stroke-width="0.70" stroke-dasharray="1.6 1.3" opacity="0.8"/>
<path d="M1130.0 183.0L1185.0 201.0" fill="none" stroke="#8a4a3a" stroke-width="0.70" stroke-dasharray="1.6 1.3" opacity="0.8"/>
<path d="M1160.0 177.0L1196.0 188.5" fill="none" stroke="#8a4a3a" stroke-width="0.70" stroke-dasharray="1.6 1.3" opacity="0.8"/>
<path d="M1150.0 206.0L1196.0 221.0" fill="none" stroke="#8a4a3a" stroke-width="0.70" stroke-dasharray="1.6 1.3" opacity="0.8"/>
<ellipse cx="1127.0" cy="190.0" rx="1.500" ry="0.800" fill="#777b88"/>
<ellipse cx="1138.0" cy="193.0" rx="1.500" ry="0.800" fill="#777b88"/>
<ellipse cx="1150.0" cy="197.0" rx="1.500" ry="0.800" fill="#777b88"/>
<ellipse cx="1163.0" cy="203.5" rx="1.500" ry="0.800" fill="#777b88"/>
<ellipse cx="1176.0" cy="208.5" rx="1.500" ry="0.800" fill="#777b88"/>
<ellipse cx="1185.0" cy="214.5" rx="1.500" ry="0.800" fill="#777b88"/>
<ellipse cx="1177.0" cy="223.0" rx="1.500" ry="0.800" fill="#777b88"/>
<ellipse cx="1130.0" cy="199.0" rx="1.500" ry="0.800" fill="#777b88"/>
<ellipse cx="1143.0" cy="183.5" rx="1.500" ry="0.800" fill="#777b88"/>
<ellipse cx="1152.0" cy="187.5" rx="1.500" ry="0.800" fill="#777b88"/>
<path d="M1112.0 195.5L1161.0 185.5" fill="none" stroke="#222" stroke-width="1.10" />
<path d="M1192.0 160.5L1225.3 153.9L1298.3 165.5L1298.3 163.3L1322.7 156.0L1392.0 164.9L1373.5 169.7L1320.5 163.5L1299.5 170.5L1226.0 158.7L1205.0 163.0z" fill="#f28b5a" stroke="#6e2a10" stroke-width="0.90" />
<path d="M1192.5 162.5L1225.3 156.0L1298.0 167.6" fill="none" stroke="#6e2a10" stroke-width="0.70" />
<path d="M1207.0 163.2L1226.0 158.9L1297.0 170.4L1271.0 178.2L1228.6 166.8L1214.0 165.2z" fill="#b3b4d2" />
<path d="M1224.0 161.0L1290.0 171.5" fill="none" stroke="#8a4a3a" stroke-width="0.70" stroke-dasharray="1.6 1.3" opacity="0.8"/>
<path d="M1236.0 164.5L1280.0 173.0" fill="none" stroke="#8a4a3a" stroke-width="0.70" stroke-dasharray="1.6 1.3" opacity="0.8"/>
<path d="M1240.0 160.8L1232.0 164.5" fill="none" stroke="#8a4a3a" stroke-width="0.70" stroke-dasharray="1.6 1.3" opacity="0.8"/>
<path d="M1262.0 164.2L1252.0 169.0" fill="none" stroke="#8a4a3a" stroke-width="0.70" stroke-dasharray="1.6 1.3" opacity="0.8"/>
<path d="M1282.0 167.5L1272.0 172.5" fill="none" stroke="#8a4a3a" stroke-width="0.70" stroke-dasharray="1.6 1.3" opacity="0.8"/>
<path d="M1228.6 166.8L1271.0 178.2L1271.0 181.0L1228.6 182.0z" fill="#2d2f33" />
<path d="M1230.2 167.8L1232.6 168.5L1232.6 181.3L1230.2 181.3z" fill="#e8eae4" />
<path d="M1235.3 169.2L1237.7 169.8L1237.7 180.9L1235.3 180.9z" fill="#e8eae4" />
<path d="M1240.4 170.6L1242.8 171.2L1242.8 180.6L1240.4 180.6z" fill="#e8eae4" />
<path d="M1245.5 171.9L1247.9 172.6L1247.9 180.2L1245.5 180.2z" fill="#e8eae4" />
<path d="M1250.6 173.3L1253.0 173.9L1253.0 179.8L1250.6 179.8z" fill="#e8eae4" />
<path d="M1255.7 174.7L1258.1 175.3L1258.1 179.4L1255.7 179.4z" fill="#e8eae4" />
<path d="M1260.8 176.0L1263.2 176.7L1263.2 179.0L1260.8 179.0z" fill="#e8eae4" />
<path d="M1161.0 186.5L1161.0 182.0L1208.7 174.9L1208.7 188.5L1195.0 193.5z" fill="#2d2f33" />
<path d="M1173.0 178.9L1175.2 178.6L1175.2 188.4L1173.0 188.7z" fill="#e3e5e8" />
<path d="M1178.9 178.0L1181.1 177.7L1181.1 187.5L1178.9 187.8z" fill="#e3e5e8" />
<path d="M1184.8 177.2L1187.0 176.9L1187.0 186.7L1184.8 187.0z" fill="#e3e5e8" />
<path d="M1190.7 176.3L1192.9 176.0L1192.9 185.8L1190.7 186.1z" fill="#e3e5e8" />
<path d="M1196.6 175.4L1198.8 175.1L1198.8 184.9L1196.6 185.2z" fill="#e3e5e8" />
<path d="M1202.5 174.5L1204.7 174.2L1204.7 184.0L1202.5 184.3z" fill="#e3e5e8" />
<path d="M1161.0 187.0L1195.4 193.7L1195.4 201.5L1161.0 192.6z" fill="#f4f4d8" stroke="#777" stroke-width="0.40" />
<path d="M1160.8 186.2L1160.8 192.8" fill="none" stroke="#999" stroke-width="1.00" />
<path d="M1192.0 160.5L1206.5 164.4L1206.5 192.5L1195.5 193.8L1193.2 178.0z" fill="#ef8757" stroke="#6e2a10" stroke-width="0.70" />
<path d="M1206.5 164.4L1228.6 164.9L1228.6 183.0L1206.5 190.0z" fill="#e87a48" stroke="#6e2a10" stroke-width="0.70" />
<path d="M1192.0 160.5L1201.0 158.8L1228.6 163.3L1228.6 164.9L1206.5 164.4z" fill="#f28b5a" stroke="#6e2a10" stroke-width="0.90" />
<path d="M1200.5 163.0L1200.5 178.0" fill="none" stroke="#6e2a10" stroke-width="0.70" />
<path d="M1211.0 164.5L1211.0 187.0" fill="none" stroke="#6e2a10" stroke-width="0.70" />
<path d="M1218.6 167.1L1226.4 167.1L1226.4 183.7L1218.6 186.0z" fill="#2b2b2e" />
<path d="M1221.2 168.5L1225.0 168.5L1225.0 176.0L1221.2 176.3z" fill="#c99b8e" />
<path d="M1221.2 178.0L1225.0 177.7L1225.0 183.0L1221.2 184.3z" fill="#b78a7e" />
<path d="M1194.3 169.0L1198.0 170.0L1198.0 178.0L1194.3 177.0z" fill="#b8806a" opacity="0.7"/>
<path d="M1195.4 191.5L1239.7 180.4L1254.0 183.2L1316.0 164.9L1320.5 163.5L1373.5 169.7L1392.0 164.9L1280.3 212.9z" fill="#f28b5a" stroke="#6e2a10" stroke-width="0.90" />
<path d="M1205.0 194.2L1208.0 188.7L1239.7 183.6L1239.7 188.2L1218.6 195.9z" fill="#e57644" stroke="#6e2a10" stroke-width="0.70" />
<path d="M1239.7 183.6L1254.0 186.4L1254.0 191.0L1239.7 188.2z" fill="#e27240" stroke="#6e2a10" stroke-width="0.70" />
<path d="M1254.0 186.4L1316.0 168.0L1316.3 170.7L1254.0 191.0z" fill="#e57644" stroke="#6e2a10" stroke-width="0.70" />
<path d="M1218.6 195.9L1239.7 188.4L1254.0 191.2L1316.3 171.0L1320.5 164.0L1373.5 169.9L1279.4 210.1z" fill="#b3b4d2" />
<path d="M1330.0 166.5L1355.0 170.0" fill="none" stroke="#8a4a3a" stroke-width="0.70" stroke-dasharray="2 1.5" opacity="0.6"/>
<path d="M1245.0 199.0L1275.0 203.0" fill="none" stroke="#8a4a3a" stroke-width="0.60" stroke-dasharray="2 1.5" opacity="0.5"/>
<path d="M1257.0 197.0L1258.6 197.0L1258.6 204.5L1257.0 204.5z" fill="#777" />
<circle cx="1322.300" cy="164.300" r="0.900" fill="#222"/>
<path d="M1195.9 191.7L1280.3 212.9L1280.3 243.0L1261.0 248.0L1195.9 227.0z" fill="#e97c4a" stroke="#6e2a10" stroke-width="0.90" />
<path d="M1195.9 197.0L1280.3 219.0" fill="none" stroke="#6e2a10" stroke-width="0.90" />
<path d="M1195.9 191.7L1195.9 227.0" fill="none" stroke="#6e2a10" stroke-width="0.90" />
<path d="M1199.5 222.0L1203.8 223.0L1203.8 231.5L1199.5 230.5z" fill="#c9a094" stroke="#8a6a60" stroke-width="0.40" />
<path d="M1222.6 218.5L1222.6 210.5" fill="none" stroke="#2020ff" stroke-width="1.00" />
<path d="M1222.6 218.5L1217.5 220.0" fill="none" stroke="#ff2020" stroke-width="1.00" />
<path d="M1222.6 218.5L1228.0 219.5" fill="none" stroke="#20d020" stroke-width="1.00" />
<path d="M1261.0 248.0L1280.3 243.0L1280.3 241.5L1251.5 252.7L1250.5 250.5z" fill="#f28b5a" stroke="#6e2a10" stroke-width="0.70" />
<path d="M1253.0 250.8L1262.0 247.6L1277.0 243.3L1258.0 251.0z" fill="#b3b4d2" />
</svg><!--/BLD-->
<!-- ANNOTATION ARROWS -->
<svg id="arrows" style="left:0;top:0" width="1863" height="813">
<defs><filter id="sh" x="-5%" y="-5%" width="110%" height="110%"><feGaussianBlur stdDeviation="1.500"/></filter></defs>
<g transform="translate(3.500 4.500)" filter="url(#sh)" opacity="0.550" fill="#1a1a1a" stroke="#1a1a1a" stroke-width="3">
<path d="M267.700 501.800L613.400 194.200M500.300 295.300L612.200 240" fill="none"/>
<path d="M256.900 511.400L262.900 496.700L272.600 507zM623.300 186.300L608.500 189.800L618.300 198.500zM623.700 234L609 233.300L615.400 246.500z" stroke="none"/>
</g>
<g fill="#c00000" stroke="#c00000" stroke-width="3">
<path d="M267.700 501.800L613.400 194.200M500.300 295.300L612.200 240" fill="none"/>
<path d="M256.900 511.400L262.900 496.700L272.600 507zM623.300 186.300L608.500 189.800L618.300 198.500zM623.700 234L609 233.300L615.400 246.500z" stroke="none"/>
</g>
</svg>

</div>
</body>
</html>
